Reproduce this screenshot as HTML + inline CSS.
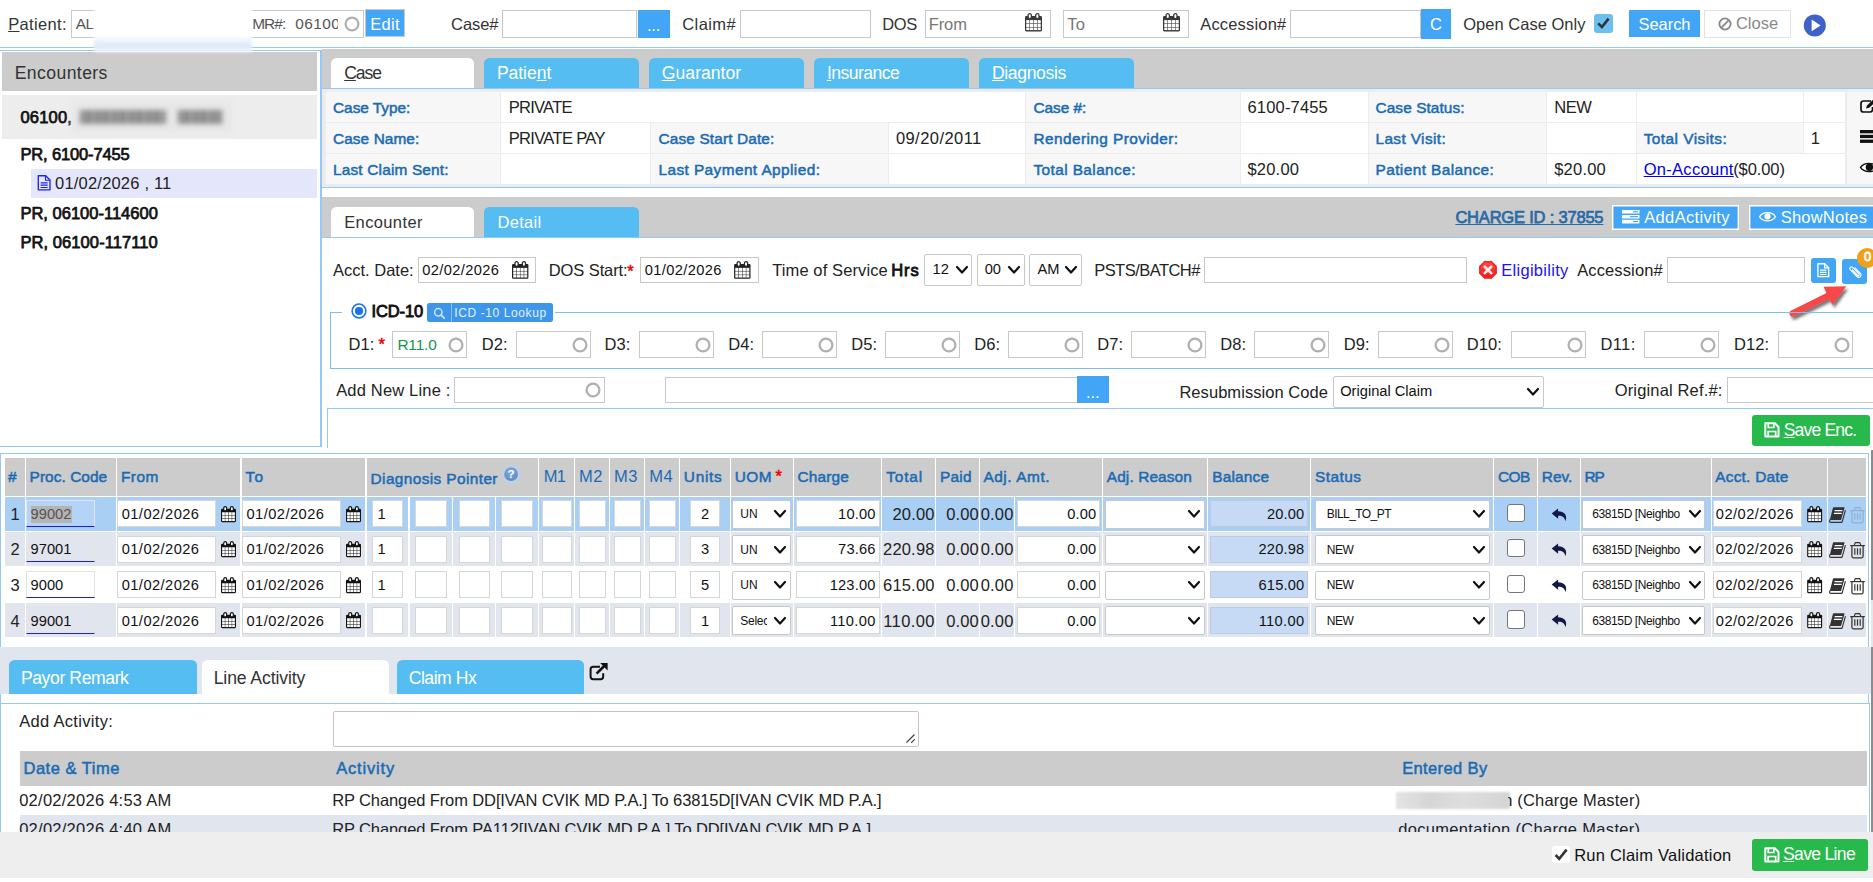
<!DOCTYPE html>
<html lang="en"><head><meta charset="utf-8"><title>Charge Master</title>
<style>
html,body{margin:0;padding:0;background:#fff;}
body{width:1873px;height:882px;overflow:hidden;position:relative;font-family:"Liberation Sans",sans-serif;}
#pg{position:absolute;left:0;top:0;width:1873px;height:882px;overflow:hidden;}
#pg div{position:absolute;box-sizing:content-box;}
.t{position:absolute;white-space:nowrap;display:block;}
.i{position:absolute;overflow:visible;}
</style></head>
<body><div id="pg">
<div style="left:0px;top:46.6px;width:1873px;height:1.6px;background:#94c8f7;"></div>
<span class="t" style="top:13px;font-size:16.5px;line-height:22px;letter-spacing:0.335px;color:#333;left:8.2px;"><u>P</u>atient:</span>
<div style="left:71px;top:10px;width:290.6px;height:25.6px;background:#fff;border:1px solid #c8c8c8;"></div>
<span class="t" style="top:13px;font-size:15.4px;line-height:22px;letter-spacing:-0.545px;color:#555;left:75.7px;">AL</span>
<span class="t" style="top:13px;font-size:15.4px;line-height:22px;letter-spacing:-0.920px;color:#555;left:252.2px;">MR#:</span>
<span class="t" style="top:13px;font-size:15.4px;line-height:22px;letter-spacing:0.478px;color:#555;left:295.2px;width:42.6px;overflow:hidden;">06100</span>
<svg class="i" style="left:343px;top:14.7px;" width="18" height="18" viewBox="0 0 18 18"><circle cx="9" cy="9" r="6.4" fill="none" stroke="#b0b0b0" stroke-width="2.3"/></svg>
<div style="left:94px;top:-6px;width:158px;height:58px;background:linear-gradient(#fff 0,#fff 72%,#dbe8f9 90%,#f4f8fd 100%);filter:blur(1.6px);z-index:5;"></div>
<div style="left:364.6px;top:9.3px;width:38px;height:25.8px;background:#42a5f5;border:1px solid #c4c9d0;"></div>
<span class="t" style="top:13px;font-size:16.5px;line-height:22px;letter-spacing:0.295px;color:#fff;left:370.2px;">Edit</span>
<span class="t" style="top:13px;font-size:16.5px;line-height:22px;letter-spacing:-0.037px;color:#333;left:451px;">Case#</span>
<div style="left:502.2px;top:10px;width:133px;height:26px;background:#fff;border:1px solid #c8c8c8;"></div>
<div style="left:637.7px;top:9.5px;width:32px;height:28px;background:#42a5f5;"></div>
<span class="t" style="top:14px;font-size:16.5px;line-height:22px;letter-spacing:-0.187px;color:#fff;left:646.92px;">...</span>
<span class="t" style="top:13px;font-size:16.5px;line-height:22px;letter-spacing:0.440px;color:#333;left:682.2px;">Claim#</span>
<div style="left:740px;top:10px;width:128.5px;height:26px;background:#fff;border:1px solid #c8c8c8;"></div>
<span class="t" style="top:13px;font-size:16.5px;line-height:22px;letter-spacing:-0.283px;color:#333;left:882.2px;">DOS</span>
<div style="left:925px;top:10px;width:124px;height:26px;background:#fff;border:1px solid #c8c8c8;"></div>
<span class="t" style="top:13px;font-size:16.5px;line-height:22px;letter-spacing:-0.125px;color:#777;left:928.8px;">From</span>
<svg class="i" style="left:1025.2px;top:13.1px;" width="17" height="18.4" viewBox="0 0 17 18.4"><rect x="0" y="3.1" width="17" height="15.3" rx="1.3" fill="#383838"/><rect x="1.25" y="7.10" width="3.10" height="3.20" fill="#fff"/><rect x="4.85" y="7.10" width="3.40" height="3.20" fill="#fff"/><rect x="8.75" y="7.10" width="3.40" height="3.20" fill="#fff"/><rect x="12.65" y="7.10" width="3.10" height="3.20" fill="#fff"/><rect x="1.25" y="10.80" width="3.10" height="3.30" fill="#fff"/><rect x="4.85" y="10.80" width="3.40" height="3.30" fill="#fff"/><rect x="8.75" y="10.80" width="3.40" height="3.30" fill="#fff"/><rect x="12.65" y="10.80" width="3.10" height="3.30" fill="#fff"/><rect x="1.25" y="14.60" width="3.10" height="2.50" fill="#fff"/><rect x="4.85" y="14.60" width="3.40" height="2.50" fill="#fff"/><rect x="8.75" y="14.60" width="3.40" height="2.50" fill="#fff"/><rect x="12.65" y="14.60" width="3.10" height="2.50" fill="#fff"/><rect x="3.1" y="0.65" width="3.3" height="4.9" rx="1.65" fill="#fff" stroke="#383838" stroke-width="1.3"/><rect x="10.7" y="0.65" width="3.3" height="4.9" rx="1.65" fill="#fff" stroke="#383838" stroke-width="1.3"/></svg>
<div style="left:1063px;top:10px;width:124px;height:26px;background:#fff;border:1px solid #c8c8c8;"></div>
<span class="t" style="top:13px;font-size:16.5px;line-height:22px;letter-spacing:0.239px;color:#777;left:1067.2px;">To</span>
<svg class="i" style="left:1163.3px;top:13.1px;" width="17" height="18.4" viewBox="0 0 17 18.4"><rect x="0" y="3.1" width="17" height="15.3" rx="1.3" fill="#383838"/><rect x="1.25" y="7.10" width="3.10" height="3.20" fill="#fff"/><rect x="4.85" y="7.10" width="3.40" height="3.20" fill="#fff"/><rect x="8.75" y="7.10" width="3.40" height="3.20" fill="#fff"/><rect x="12.65" y="7.10" width="3.10" height="3.20" fill="#fff"/><rect x="1.25" y="10.80" width="3.10" height="3.30" fill="#fff"/><rect x="4.85" y="10.80" width="3.40" height="3.30" fill="#fff"/><rect x="8.75" y="10.80" width="3.40" height="3.30" fill="#fff"/><rect x="12.65" y="10.80" width="3.10" height="3.30" fill="#fff"/><rect x="1.25" y="14.60" width="3.10" height="2.50" fill="#fff"/><rect x="4.85" y="14.60" width="3.40" height="2.50" fill="#fff"/><rect x="8.75" y="14.60" width="3.40" height="2.50" fill="#fff"/><rect x="12.65" y="14.60" width="3.10" height="2.50" fill="#fff"/><rect x="3.1" y="0.65" width="3.3" height="4.9" rx="1.65" fill="#fff" stroke="#383838" stroke-width="1.3"/><rect x="10.7" y="0.65" width="3.3" height="4.9" rx="1.65" fill="#fff" stroke="#383838" stroke-width="1.3"/></svg>
<span class="t" style="top:13px;font-size:16.5px;line-height:22px;letter-spacing:0.184px;color:#333;left:1200.2px;">Accession#</span>
<div style="left:1290.2px;top:10px;width:129px;height:26px;background:#fff;border:1px solid #c8c8c8;"></div>
<div style="left:1421px;top:9px;width:30px;height:30px;background:#42a5f5;"></div>
<span class="t" style="top:13px;font-size:16.5px;line-height:22px;letter-spacing:-1.513px;color:#fff;left:1430.04px;">C</span>
<span class="t" style="top:13px;font-size:16.5px;line-height:22px;letter-spacing:0.026px;color:#333;left:1463.2px;">Open Case Only</span>
<div style="left:1594.2px;top:14.3px;width:18.6px;height:18.3px;background:#6cc0ef;border-radius:3px;"></div>
<svg class="i" style="left:1594.2px;top:14.3px;" width="18.6" height="18.3" viewBox="0 0 18.6 18.3"><path d="M4.2 9.4 L7.9 13 L14.6 4.6" fill="none" stroke="#333" stroke-width="2.6"/></svg>
<div style="left:1629px;top:10px;width:71px;height:27px;background:#42a5f5;"></div>
<span class="t" style="top:13px;font-size:16.5px;line-height:22px;letter-spacing:-0.078px;color:#fff;left:1638.6px;">Search</span>
<div style="left:1704px;top:10px;width:84.6px;height:26.4px;background:#fff;border:1px solid #e2e2e2;"></div>
<svg class="i" style="left:1718px;top:16.5px;" width="14" height="14" viewBox="0 0 14 14"><circle cx="7" cy="7" r="5.6" fill="none" stroke="#888" stroke-width="1.8"/><path d="M3.2 10.8 L10.8 3.2" stroke="#888" stroke-width="1.8"/></svg>
<span class="t" style="top:12px;font-size:16.5px;line-height:22px;letter-spacing:0.023px;color:#888;left:1735.9px;">Close</span>
<svg class="i" style="left:1803px;top:14px;" width="23" height="23" viewBox="0 0 23 23"><circle cx="11.8" cy="11.4" r="11" fill="#3d62c9"/><path d="M8.6 5.6 L17.6 11.4 L8.6 17.2 Z" fill="#fff"/></svg>
<div style="left:0px;top:49.6px;width:322px;height:1.3px;background:#94c8f7;"></div>
<div style="left:0px;top:445.7px;width:322px;height:1.3px;background:#94c8f7;"></div>
<div style="left:320.2px;top:49.6px;width:1.9px;height:397.4px;background:#94c8f7;"></div>
<div style="left:2px;top:52px;width:315px;height:38.8px;background:#cccccc;"></div>
<span class="t" style="top:62px;font-size:17.6px;line-height:22px;letter-spacing:0.412px;color:#333;left:14.7px;">Encounters</span>
<div style="left:2px;top:94.8px;width:315px;height:44px;background:#ededed;"></div>
<span class="t" style="top:106px;font-size:16.5px;line-height:22px;letter-spacing:0.210px;color:#111;-webkit-text-stroke:0.75px #111;left:20.4px;">06100,</span>
<div style="left:72px;top:103px;width:160px;height:28px;background:#e6e6e6;filter:blur(3px);"></div>
<div style="left:80px;top:110px;width:86px;height:13.5px;background:repeating-linear-gradient(90deg,#6e6e6e 0,#8c8c8c 5px,#666 9px,#999 13px,#707070 17px);filter:blur(2.8px);opacity:.8;"></div>
<div style="left:178px;top:110px;width:44px;height:13.5px;background:repeating-linear-gradient(90deg,#6e6e6e 0,#8c8c8c 5px,#666 9px,#999 13px,#707070 17px);filter:blur(2.8px);opacity:.8;"></div>
<span class="t" style="top:143px;font-size:16.5px;line-height:22px;letter-spacing:-0.135px;color:#111;-webkit-text-stroke:0.75px #111;left:20.4px;">PR, 6100-7455</span>
<div style="left:31.2px;top:169px;width:285.8px;height:28.6px;background:#e4e7fc;"></div>
<svg class="i" style="left:37px;top:175.2px;" width="14.3" height="15.6" viewBox="0 0 14 16"><path d="M1 0.8 H8.6 L13 5.2 V15.2 H1 Z" fill="none" stroke="#2222ee" stroke-width="1.4" stroke-linejoin="round"/><path d="M8.4 1 V5.4 H12.8" fill="none" stroke="#2222ee" stroke-width="1.19"/><path d="M3.4 8 H10.6 M3.4 10.4 H10.6 M3.4 12.8 H10.6" stroke="#2222ee" stroke-width="1.19"/></svg>
<span class="t" style="top:172px;font-size:16.5px;line-height:22px;letter-spacing:0.194px;color:#222;left:55.1px;">01/02/2026 , 11</span>
<span class="t" style="top:202px;font-size:16.5px;line-height:22px;letter-spacing:0.009px;color:#111;-webkit-text-stroke:0.75px #111;left:20.4px;">PR, 06100-114600</span>
<span class="t" style="top:231px;font-size:16.5px;line-height:22px;letter-spacing:0.086px;color:#111;-webkit-text-stroke:0.75px #111;left:20.4px;">PR, 06100-117110</span>
<div style="left:322px;top:49.4px;width:1551px;height:39px;background:#cccccc;"></div>
<div style="left:331px;top:58.2px;width:143px;height:30.3px;background:#fff;border-radius:5.5px 5.5px 0 0;"></div>
<span class="t" style="top:62px;font-size:17.6px;line-height:22px;letter-spacing:-1.066px;color:#333;left:344.2px;"><u>C</u>ase</span>
<div style="left:484px;top:58.2px;width:155px;height:30.3px;background:#55bdf2;border-radius:5.5px 5.5px 0 0;"></div>
<span class="t" style="top:62px;font-size:17.6px;line-height:22px;letter-spacing:-0.067px;color:#fff;left:496.9px;">Patie<u>n</u>t</span>
<div style="left:649px;top:58.2px;width:155px;height:30.3px;background:#55bdf2;border-radius:5.5px 5.5px 0 0;"></div>
<span class="t" style="top:62px;font-size:17.6px;line-height:22px;letter-spacing:0.022px;color:#fff;left:661.8px;"><u>G</u>uarantor</span>
<div style="left:814px;top:58.2px;width:155px;height:30.3px;background:#55bdf2;border-radius:5.5px 5.5px 0 0;"></div>
<span class="t" style="top:62px;font-size:17.6px;line-height:22px;letter-spacing:-0.539px;color:#fff;left:826.9px;"><u>I</u>nsurance</span>
<div style="left:979px;top:58.2px;width:155px;height:30.3px;background:#55bdf2;border-radius:5.5px 5.5px 0 0;"></div>
<span class="t" style="top:62px;font-size:17.6px;line-height:22px;letter-spacing:-0.382px;color:#fff;left:992px;"><u>D</u>iagnosis</span>
<div style="left:322px;top:88.3px;width:1553px;height:97.6px;border:1.4px solid #94c8f7;border-left:none;background:#ececec;"></div>
<div style="left:326.3px;top:92px;width:173.7px;height:30.2px;background:#f7f7f7;"></div>
<div style="left:501.2px;top:92px;width:523.5px;height:30.2px;background:#fff;"></div>
<div style="left:1026px;top:92px;width:214px;height:30.2px;background:#f7f7f7;"></div>
<div style="left:1241px;top:92px;width:127px;height:30.2px;background:#fff;"></div>
<div style="left:1369.3px;top:92px;width:176.9px;height:30.2px;background:#f7f7f7;"></div>
<div style="left:1547.4px;top:92px;width:88.6px;height:30.2px;background:#fff;"></div>
<div style="left:1637.3px;top:92px;width:165.7px;height:30.2px;background:#fff;"></div>
<div style="left:1804px;top:92px;width:41.2px;height:30.2px;background:#fff;"></div>
<div style="left:326.3px;top:123.4px;width:173.7px;height:29.4px;background:#f7f7f7;"></div>
<div style="left:501.2px;top:123.4px;width:148.5px;height:29.4px;background:#fff;"></div>
<div style="left:651px;top:123.4px;width:236.9px;height:29.4px;background:#f7f7f7;"></div>
<div style="left:889px;top:123.4px;width:135.7px;height:29.4px;background:#fff;"></div>
<div style="left:1026px;top:123.4px;width:214px;height:29.4px;background:#f7f7f7;"></div>
<div style="left:1241px;top:123.4px;width:127px;height:29.4px;background:#fff;"></div>
<div style="left:1369.3px;top:123.4px;width:176.9px;height:29.4px;background:#f7f7f7;"></div>
<div style="left:1547.4px;top:123.4px;width:88.6px;height:29.4px;background:#fff;"></div>
<div style="left:1637.3px;top:123.4px;width:165.7px;height:29.4px;background:#f7f7f7;"></div>
<div style="left:1804px;top:123.4px;width:41.2px;height:29.4px;background:#fff;"></div>
<div style="left:326.3px;top:154px;width:173.7px;height:29.6px;background:#f7f7f7;"></div>
<div style="left:501.2px;top:154px;width:148.5px;height:29.6px;background:#fff;"></div>
<div style="left:651px;top:154px;width:236.9px;height:29.6px;background:#f7f7f7;"></div>
<div style="left:889px;top:154px;width:135.7px;height:29.6px;background:#fff;"></div>
<div style="left:1026px;top:154px;width:214px;height:29.6px;background:#f7f7f7;"></div>
<div style="left:1241px;top:154px;width:127px;height:29.6px;background:#fff;"></div>
<div style="left:1369.3px;top:154px;width:176.9px;height:29.6px;background:#f7f7f7;"></div>
<div style="left:1547.4px;top:154px;width:88.6px;height:29.6px;background:#fff;"></div>
<div style="left:1637.3px;top:154px;width:207.9px;height:29.6px;background:#fff;"></div>
<div style="left:1846.5px;top:92px;width:27px;height:91.6px;background:#f7f7f7;"></div>
<span class="t" style="top:97px;font-size:15.4px;line-height:22px;letter-spacing:-0.021px;color:#1a6bb3;-webkit-text-stroke:0.5px #1a6bb3;left:333px;">Case Type:</span>
<span class="t" style="top:128px;font-size:15.4px;line-height:22px;letter-spacing:0.084px;color:#1a6bb3;-webkit-text-stroke:0.5px #1a6bb3;left:333px;">Case Name:</span>
<span class="t" style="top:159px;font-size:15.4px;line-height:22px;letter-spacing:0.177px;color:#1a6bb3;-webkit-text-stroke:0.5px #1a6bb3;left:333px;">Last Claim Sent:</span>
<span class="t" style="top:128px;font-size:15.4px;line-height:22px;letter-spacing:0.137px;color:#1a6bb3;-webkit-text-stroke:0.5px #1a6bb3;left:658.5px;">Case Start Date:</span>
<span class="t" style="top:159px;font-size:15.4px;line-height:22px;letter-spacing:0.413px;color:#1a6bb3;-webkit-text-stroke:0.5px #1a6bb3;left:658.5px;">Last Payment Applied:</span>
<span class="t" style="top:97px;font-size:15.4px;line-height:22px;letter-spacing:-0.009px;color:#1a6bb3;-webkit-text-stroke:0.5px #1a6bb3;left:1033.4px;">Case #:</span>
<span class="t" style="top:128px;font-size:15.4px;line-height:22px;letter-spacing:0.430px;color:#1a6bb3;-webkit-text-stroke:0.5px #1a6bb3;left:1033.4px;">Rendering Provider:</span>
<span class="t" style="top:159px;font-size:15.4px;line-height:22px;letter-spacing:0.412px;color:#1a6bb3;-webkit-text-stroke:0.5px #1a6bb3;left:1033.4px;">Total Balance:</span>
<span class="t" style="top:97px;font-size:15.4px;line-height:22px;letter-spacing:0.087px;color:#1a6bb3;-webkit-text-stroke:0.5px #1a6bb3;left:1375.5px;">Case Status:</span>
<span class="t" style="top:128px;font-size:15.4px;line-height:22px;letter-spacing:0.374px;color:#1a6bb3;-webkit-text-stroke:0.5px #1a6bb3;left:1375.5px;">Last Visit:</span>
<span class="t" style="top:159px;font-size:15.4px;line-height:22px;letter-spacing:0.416px;color:#1a6bb3;-webkit-text-stroke:0.5px #1a6bb3;left:1375.5px;">Patient Balance:</span>
<span class="t" style="top:128px;font-size:15.4px;line-height:22px;letter-spacing:0.461px;color:#1a6bb3;-webkit-text-stroke:0.5px #1a6bb3;left:1643.7px;">Total Visits:</span>
<span class="t" style="top:96px;font-size:16.5px;line-height:22px;letter-spacing:-0.720px;color:#222;left:508.7px;">PRIVATE</span>
<span class="t" style="top:127px;font-size:16.5px;line-height:22px;letter-spacing:-0.653px;color:#222;left:508.7px;">PRIVATE PAY</span>
<span class="t" style="top:127px;font-size:16.5px;line-height:22px;letter-spacing:0.439px;color:#222;left:895.9px;">09/20/2011</span>
<span class="t" style="top:96px;font-size:16.5px;line-height:22px;letter-spacing:0.169px;color:#222;left:1247.5px;">6100-7455</span>
<span class="t" style="top:158px;font-size:16.5px;line-height:22px;letter-spacing:0.194px;color:#222;left:1247.5px;">$20.00</span>
<span class="t" style="top:96px;font-size:16.5px;line-height:22px;letter-spacing:-0.433px;color:#222;left:1554.2px;">NEW</span>
<span class="t" style="top:158px;font-size:16.5px;line-height:22px;letter-spacing:0.227px;color:#222;left:1554.2px;">$20.00</span>
<span class="t" style="top:158px;font-size:16.5px;line-height:22px;letter-spacing:0.291px;color:#0000ee;left:1643.7px;text-decoration:underline;">On-Account</span>
<span class="t" style="top:158px;font-size:16.5px;line-height:22px;letter-spacing:-0.095px;color:#222;left:1733.2px;">($0.00)</span>
<span class="t" style="top:127px;font-size:16.5px;line-height:22px;letter-spacing:0.262px;color:#222;left:1810.8px;">1</span>
<svg class="i" style="left:1860px;top:98.6px;" width="16" height="14" viewBox="0 0 16 14"><path d="M11 2 H3.5 C2 2 1 3 1 4.5 V10.5 C1 12 2 13 3.5 13 H10 C11.5 13 12.5 12 12.5 10.5 V8" fill="none" stroke="#111" stroke-width="1.7"/><path d="M6 9.5 L7 6.5 L13 0.8 L15.4 3 L9.2 8.8 Z" fill="#111"/></svg>
<svg class="i" style="left:1860px;top:129.5px;" width="16" height="13" viewBox="0 0 16 13"><rect x="0" y="0" width="16" height="3.3" fill="#111"/><rect x="0" y="4.8" width="16" height="3.3" fill="#111"/><rect x="0" y="9.6" width="16" height="3.3" fill="#111"/></svg>
<svg class="i" style="left:1860px;top:161.6px;" width="18" height="11.6" viewBox="0 0 18 11.6"><path d="M0.5 5.5 C4 0 14 0 17.5 5.5 C14 11 4 11 0.5 5.5 Z" fill="#fff" stroke="#111" stroke-width="1.4"/><circle cx="9.4" cy="5.2" r="3.7" fill="#111"/></svg>
<div style="left:322px;top:197px;width:1551px;height:40.2px;background:#cccccc;"></div>
<div style="left:322px;top:236.8px;width:1551px;height:1.4px;background:#94c8f7;"></div>
<div style="left:331px;top:206.8px;width:143px;height:30.3px;background:#fff;border-radius:5.5px 5.5px 0 0;"></div>
<span class="t" style="top:211px;font-size:16.5px;line-height:22px;letter-spacing:0.379px;color:#333;left:344.2px;">Encounter</span>
<div style="left:484px;top:206.8px;width:155px;height:30.3px;background:#55bdf2;border-radius:5.5px 5.5px 0 0;"></div>
<span class="t" style="top:211px;font-size:16.5px;line-height:22px;letter-spacing:0.335px;color:#fff;left:497.4px;">Detail</span>
<span class="t" style="top:206px;font-size:16.5px;line-height:22px;letter-spacing:-0.198px;color:#2b6aa6;-webkit-text-stroke:0.75px #2b6aa6;left:1455.4px;text-decoration:underline;">CHARGE ID : 37855</span>
<div style="left:1612px;top:205px;width:127.3px;height:24.6px;background:#42a5f5;box-shadow:inset 0 0 0 1.4px #fff;"></div>
<svg class="i" style="left:1621.5px;top:210px;" width="17.5" height="13.5" viewBox="0 0 17.5 13.5"><rect x="0" y="0" width="17.5" height="3.6" rx="0.6" fill="#fff"/><rect x="0" y="4.9" width="17.5" height="3.6" rx="0.6" fill="#fff"/><rect x="0" y="9.8" width="17.5" height="3.6" rx="0.6" fill="#fff"/><rect x="11" y="1.2" width="5" height="1.1" fill="#42a5f5"/><rect x="8" y="6.1" width="8" height="1.1" fill="#42a5f5"/><rect x="11" y="11" width="5" height="1.1" fill="#42a5f5"/></svg>
<span class="t" style="top:206px;font-size:16.5px;line-height:22px;letter-spacing:0.364px;color:#fff;left:1644.2px;">AddActivity</span>
<div style="left:1748.8px;top:205px;width:130px;height:24.6px;background:#42a5f5;box-shadow:inset 0 0 0 1.4px #fff;"></div>
<svg class="i" style="left:1758.5px;top:211.2px;" width="17" height="11.5" viewBox="0 0 18 12"><path d="M0.6 6 C4 0.2 14 0.2 17.4 6 C14 11.8 4 11.8 0.6 6 Z" fill="none" stroke="#fff" stroke-width="1.5"/><circle cx="9" cy="5.6" r="3.3" fill="#fff"/><circle cx="7.8" cy="4.4" r="1.1" fill="#42a5f5" opacity="0"/></svg>
<span class="t" style="top:206px;font-size:16.5px;line-height:22px;letter-spacing:0.227px;color:#fff;left:1780.7px;">ShowNotes</span>
<span class="t" style="top:259px;font-size:16.5px;line-height:22px;letter-spacing:-0.005px;color:#222;left:333px;">Acct. Date:</span>
<div style="left:418.1px;top:257px;width:115.5px;height:24.3px;background:#fff;border:1px solid #c8c8c8;"></div>
<span class="t" style="top:259px;font-size:14.67px;line-height:22px;letter-spacing:0.379px;color:#111;left:422.2px;">02/02/2026</span>
<svg class="i" style="left:512px;top:260.5px;" width="16.4" height="17.8" viewBox="0 0 17 18.4"><rect x="0" y="3.1" width="17" height="15.3" rx="1.3" fill="#222"/><rect x="1.25" y="7.10" width="3.10" height="3.20" fill="#fff"/><rect x="4.85" y="7.10" width="3.40" height="3.20" fill="#fff"/><rect x="8.75" y="7.10" width="3.40" height="3.20" fill="#fff"/><rect x="12.65" y="7.10" width="3.10" height="3.20" fill="#fff"/><rect x="1.25" y="10.80" width="3.10" height="3.30" fill="#fff"/><rect x="4.85" y="10.80" width="3.40" height="3.30" fill="#fff"/><rect x="8.75" y="10.80" width="3.40" height="3.30" fill="#fff"/><rect x="12.65" y="10.80" width="3.10" height="3.30" fill="#fff"/><rect x="1.25" y="14.60" width="3.10" height="2.50" fill="#fff"/><rect x="4.85" y="14.60" width="3.40" height="2.50" fill="#fff"/><rect x="8.75" y="14.60" width="3.40" height="2.50" fill="#fff"/><rect x="12.65" y="14.60" width="3.10" height="2.50" fill="#fff"/><rect x="3.1" y="0.65" width="3.3" height="4.9" rx="1.65" fill="#fff" stroke="#222" stroke-width="1.3"/><rect x="10.7" y="0.65" width="3.3" height="4.9" rx="1.65" fill="#fff" stroke="#222" stroke-width="1.3"/></svg>
<span class="t" style="top:259px;font-size:16.5px;line-height:22px;letter-spacing:-0.103px;color:#222;left:548.8px;">DOS Start:</span>
<span class="t" style="top:260px;font-size:16.5px;line-height:22px;letter-spacing:0.078px;color:#e00;-webkit-text-stroke:0.5px #e00;left:627.2px;">*</span>
<div style="left:640.2px;top:257px;width:116.4px;height:24.3px;background:#fff;border:1px solid #c8c8c8;"></div>
<span class="t" style="top:259px;font-size:14.67px;line-height:22px;letter-spacing:0.379px;color:#111;left:644.7px;">01/02/2026</span>
<svg class="i" style="left:734px;top:260.5px;" width="16.6" height="17.8" viewBox="0 0 17 18.4"><rect x="0" y="3.1" width="17" height="15.3" rx="1.3" fill="#222"/><rect x="1.25" y="7.10" width="3.10" height="3.20" fill="#fff"/><rect x="4.85" y="7.10" width="3.40" height="3.20" fill="#fff"/><rect x="8.75" y="7.10" width="3.40" height="3.20" fill="#fff"/><rect x="12.65" y="7.10" width="3.10" height="3.20" fill="#fff"/><rect x="1.25" y="10.80" width="3.10" height="3.30" fill="#fff"/><rect x="4.85" y="10.80" width="3.40" height="3.30" fill="#fff"/><rect x="8.75" y="10.80" width="3.40" height="3.30" fill="#fff"/><rect x="12.65" y="10.80" width="3.10" height="3.30" fill="#fff"/><rect x="1.25" y="14.60" width="3.10" height="2.50" fill="#fff"/><rect x="4.85" y="14.60" width="3.40" height="2.50" fill="#fff"/><rect x="8.75" y="14.60" width="3.40" height="2.50" fill="#fff"/><rect x="12.65" y="14.60" width="3.10" height="2.50" fill="#fff"/><rect x="3.1" y="0.65" width="3.3" height="4.9" rx="1.65" fill="#fff" stroke="#222" stroke-width="1.3"/><rect x="10.7" y="0.65" width="3.3" height="4.9" rx="1.65" fill="#fff" stroke="#222" stroke-width="1.3"/></svg>
<span class="t" style="top:259px;font-size:16.5px;line-height:22px;letter-spacing:0.108px;color:#222;left:772.2px;">Time of Service</span>
<span class="t" style="top:259px;font-size:16.5px;line-height:22px;letter-spacing:0.909px;color:#111;-webkit-text-stroke:0.85px #111;left:891.2px;">Hrs</span>
<div style="left:924.3px;top:254.4px;width:46.2px;height:29.2px;background:#fff;border:1px solid #c8c8c8;border-radius:2px;"></div>
<span class="t" style="top:258px;font-size:14.67px;line-height:22px;letter-spacing:0.000px;color:#111;left:932.5px;">12</span>
<svg class="i" style="left:954.8px;top:265.25px;" width="14" height="9.5" viewBox="0 0 14 9.5"><polyline points="2,2 7,7.5 12,2" fill="none" stroke="#111" stroke-width="2.2" stroke-linecap="round" stroke-linejoin="round"/></svg>
<div style="left:976.5px;top:254.4px;width:46.2px;height:29.2px;background:#fff;border:1px solid #c8c8c8;border-radius:2px;"></div>
<span class="t" style="top:258px;font-size:14.67px;line-height:22px;letter-spacing:0.000px;color:#111;left:984.7px;">00</span>
<svg class="i" style="left:1007px;top:265.25px;" width="14" height="9.5" viewBox="0 0 14 9.5"><polyline points="2,2 7,7.5 12,2" fill="none" stroke="#111" stroke-width="2.2" stroke-linecap="round" stroke-linejoin="round"/></svg>
<div style="left:1029.2px;top:254.4px;width:50.4px;height:29.2px;background:#fff;border:1px solid #c8c8c8;border-radius:2px;"></div>
<span class="t" style="top:258px;font-size:14.67px;line-height:22px;letter-spacing:0.000px;color:#111;left:1037.4px;">AM</span>
<svg class="i" style="left:1063.9px;top:265.25px;" width="14" height="9.5" viewBox="0 0 14 9.5"><polyline points="2,2 7,7.5 12,2" fill="none" stroke="#111" stroke-width="2.2" stroke-linecap="round" stroke-linejoin="round"/></svg>
<span class="t" style="top:259px;font-size:16.5px;line-height:22px;letter-spacing:-0.539px;color:#222;left:1094.2px;">PSTS/BATCH#</span>
<div style="left:1204px;top:257px;width:261px;height:24.3px;background:#fff;border:1px solid #c8c8c8;"></div>
<svg class="i" style="left:1479px;top:261.1px;" width="18" height="17.8" viewBox="0 0 19.5 19.5"><defs><linearGradient id="eg" x1="0" y1="0" x2="0" y2="1"><stop offset="0" stop-color="#ff4a44"/><stop offset="1" stop-color="#ee1c1c"/></linearGradient></defs><path d="M6 0.8 H13.5 L18.7 6 V13.5 L13.5 18.7 H6 L0.8 13.5 V6 Z" fill="url(#eg)" stroke="#f02222" stroke-width="1.6" stroke-linejoin="round"/><path d="M6.2 6.2 L13.3 13.3 M13.3 6.2 L6.2 13.3" stroke="#ffe9e6" stroke-width="3" stroke-linecap="round"/></svg>
<span class="t" style="top:259px;font-size:16.5px;line-height:22px;letter-spacing:0.300px;color:#1c10ff;left:1501.2px;">Eligibility</span>
<span class="t" style="top:259px;font-size:16.5px;line-height:22px;letter-spacing:0.124px;color:#222;left:1577.2px;">Accession#</span>
<div style="left:1667px;top:257px;width:135.5px;height:24.3px;background:#fff;border:1px solid #c8c8c8;"></div>
<div style="left:1811px;top:258.2px;width:24.9px;height:24.6px;background:#42a5f5;border-radius:3px;"></div>
<svg class="i" style="left:1817.2px;top:263.4px;" width="12.6" height="14.4" viewBox="0 0 14 16"><path d="M1 0.8 H8.6 L13 5.2 V15.2 H1 Z" fill="none" stroke="#fff" stroke-width="1.5" stroke-linejoin="round"/><path d="M8.4 1 V5.4 H12.8" fill="none" stroke="#fff" stroke-width="1.275"/><path d="M3.4 8 H10.6 M3.4 10.4 H10.6 M3.4 12.8 H10.6" stroke="#fff" stroke-width="1.275"/></svg>
<div style="left:1842.2px;top:259.1px;width:24.5px;height:24.8px;background:#42a5f5;border-radius:3px;"></div>
<svg class="i" style="left:1846.5px;top:263.5px;" width="16" height="16" viewBox="0 0 16 16"><path d="M5.4 5.9 L10.6 11.3 C11.5 12.2 12.9 10.9 12 10 L5.6 3.4 C4 1.8 1.7 4 3.3 5.7 L9.9 12.5 C12.3 14.9 15.6 11.6 13.2 9.2 L8 3.9" fill="none" stroke="#fff" stroke-width="1.15" stroke-linecap="round"/></svg>
<div style="left:1857.1px;top:248px;width:20.4px;height:20.4px;background:#f0a018;border-radius:50%;"></div>
<span class="t" style="top:246px;font-size:13px;line-height:22px;letter-spacing:-0.326px;color:#fff;-webkit-text-stroke:0.8px #fff;left:1863.98px;">0</span>
<svg class="i" style="left:1780px;top:280px;" width="80" height="50" viewBox="0 0 80 50"><defs><filter id="sh" x="-30%" y="-30%" width="160%" height="180%"><feGaussianBlur in="SourceAlpha" stdDeviation="1.5"/><feOffset dx="1.5" dy="3.2"/><feComponentTransfer><feFuncA type="linear" slope="0.55"/></feComponentTransfer><feMerge><feMergeNode/><feMergeNode in="SourceGraphic"/></feMerge></filter></defs><g filter="url(#sh)"><path d="M12.6 33.4 L49 15.4" stroke="#f7464a" stroke-width="6.2" stroke-linecap="round"/><path d="M43.5 6.8 L66.2 6.3 L52.4 24.9 Z" fill="#f7464a"/></g></svg>
<div style="left:330px;top:311.8px;width:1560px;height:55.4px;border:1.3px solid #7fc0ea;border-right:none;"></div>
<div style="left:342px;top:300px;width:213px;height:24px;background:#fff;"></div>
<svg class="i" style="left:351.1px;top:303.4px;" width="16" height="16" viewBox="0 0 16 16"><circle cx="8" cy="8" r="6.9" fill="#fff" stroke="#1a73e8" stroke-width="1.5"/><circle cx="8" cy="8" r="4.1" fill="#1a73e8"/></svg>
<span class="t" style="top:300px;font-size:16.5px;line-height:22px;letter-spacing:-0.128px;color:#111;-webkit-text-stroke:0.9px #111;left:371.5px;">ICD-10</span>
<div style="left:427.2px;top:303.3px;width:125.7px;height:18.6px;background:#3d96ea;border-radius:2.5px;"></div>
<div style="left:450.6px;top:303.3px;width:1px;height:18.6px;background:#8ac3f5;"></div>
<svg class="i" style="left:432.6px;top:306.5px;" width="13" height="13" viewBox="0 0 13 13"><circle cx="5.3" cy="5.3" r="3.7" fill="none" stroke="#cfe4fa" stroke-width="1.5"/><path d="M8.2 8.2 L11.2 11.2" stroke="#cfe4fa" stroke-width="1.7" stroke-linecap="round"/></svg>
<span class="t" style="top:302px;font-size:12px;line-height:22px;letter-spacing:0.612px;color:#e4f0fd;left:454.2px;font-family:"DejaVu Sans","Liberation Sans",sans-serif;">ICD -10 Lookup</span>
<span class="t" style="top:333px;font-size:16.5px;line-height:22px;letter-spacing:0.061px;color:#222;left:348.6px;">D1:</span>
<div style="left:392px;top:331.4px;width:72.6px;height:24.2px;background:#fff;border:1px solid #c8c8c8;"></div>
<svg class="i" style="left:447px;top:335.8px;" width="18" height="18" viewBox="0 0 18 18"><circle cx="9" cy="9" r="6.4" fill="none" stroke="#b0b0b0" stroke-width="2.3"/></svg>
<span class="t" style="top:333px;font-size:16.5px;line-height:22px;letter-spacing:0.061px;color:#222;left:481.8px;">D2:</span>
<div style="left:516.2px;top:331.4px;width:72.6px;height:24.2px;background:#fff;border:1px solid #c8c8c8;"></div>
<svg class="i" style="left:571.2px;top:335.8px;" width="18" height="18" viewBox="0 0 18 18"><circle cx="9" cy="9" r="6.4" fill="none" stroke="#b0b0b0" stroke-width="2.3"/></svg>
<span class="t" style="top:333px;font-size:16.5px;line-height:22px;letter-spacing:0.061px;color:#222;left:604.5px;">D3:</span>
<div style="left:639px;top:331.4px;width:72.6px;height:24.2px;background:#fff;border:1px solid #c8c8c8;"></div>
<svg class="i" style="left:694px;top:335.8px;" width="18" height="18" viewBox="0 0 18 18"><circle cx="9" cy="9" r="6.4" fill="none" stroke="#b0b0b0" stroke-width="2.3"/></svg>
<span class="t" style="top:333px;font-size:16.5px;line-height:22px;letter-spacing:0.061px;color:#222;left:728.2px;">D4:</span>
<div style="left:762.2px;top:331.4px;width:72.6px;height:24.2px;background:#fff;border:1px solid #c8c8c8;"></div>
<svg class="i" style="left:817.2px;top:335.8px;" width="18" height="18" viewBox="0 0 18 18"><circle cx="9" cy="9" r="6.4" fill="none" stroke="#b0b0b0" stroke-width="2.3"/></svg>
<span class="t" style="top:333px;font-size:16.5px;line-height:22px;letter-spacing:0.061px;color:#222;left:851.2px;">D5:</span>
<div style="left:885.4px;top:331.4px;width:72.6px;height:24.2px;background:#fff;border:1px solid #c8c8c8;"></div>
<svg class="i" style="left:940.4px;top:335.8px;" width="18" height="18" viewBox="0 0 18 18"><circle cx="9" cy="9" r="6.4" fill="none" stroke="#b0b0b0" stroke-width="2.3"/></svg>
<span class="t" style="top:333px;font-size:16.5px;line-height:22px;letter-spacing:0.061px;color:#222;left:974.3px;">D6:</span>
<div style="left:1008.3px;top:331.4px;width:72.6px;height:24.2px;background:#fff;border:1px solid #c8c8c8;"></div>
<svg class="i" style="left:1063.3px;top:335.8px;" width="18" height="18" viewBox="0 0 18 18"><circle cx="9" cy="9" r="6.4" fill="none" stroke="#b0b0b0" stroke-width="2.3"/></svg>
<span class="t" style="top:333px;font-size:16.5px;line-height:22px;letter-spacing:0.061px;color:#222;left:1097.2px;">D7:</span>
<div style="left:1131.2px;top:331.4px;width:72.6px;height:24.2px;background:#fff;border:1px solid #c8c8c8;"></div>
<svg class="i" style="left:1186.2px;top:335.8px;" width="18" height="18" viewBox="0 0 18 18"><circle cx="9" cy="9" r="6.4" fill="none" stroke="#b0b0b0" stroke-width="2.3"/></svg>
<span class="t" style="top:333px;font-size:16.5px;line-height:22px;letter-spacing:0.061px;color:#222;left:1220.2px;">D8:</span>
<div style="left:1254.2px;top:331.4px;width:72.6px;height:24.2px;background:#fff;border:1px solid #c8c8c8;"></div>
<svg class="i" style="left:1309.2px;top:335.8px;" width="18" height="18" viewBox="0 0 18 18"><circle cx="9" cy="9" r="6.4" fill="none" stroke="#b0b0b0" stroke-width="2.3"/></svg>
<span class="t" style="top:333px;font-size:16.5px;line-height:22px;letter-spacing:0.061px;color:#222;left:1343.7px;">D9:</span>
<div style="left:1378.1px;top:331.4px;width:72.6px;height:24.2px;background:#fff;border:1px solid #c8c8c8;"></div>
<svg class="i" style="left:1433.1px;top:335.8px;" width="18" height="18" viewBox="0 0 18 18"><circle cx="9" cy="9" r="6.4" fill="none" stroke="#b0b0b0" stroke-width="2.3"/></svg>
<span class="t" style="top:333px;font-size:16.5px;line-height:22px;letter-spacing:0.111px;color:#222;left:1466.7px;">D10:</span>
<div style="left:1511.2px;top:331.4px;width:72.6px;height:24.2px;background:#fff;border:1px solid #c8c8c8;"></div>
<svg class="i" style="left:1566.2px;top:335.8px;" width="18" height="18" viewBox="0 0 18 18"><circle cx="9" cy="9" r="6.4" fill="none" stroke="#b0b0b0" stroke-width="2.3"/></svg>
<span class="t" style="top:333px;font-size:16.5px;line-height:22px;letter-spacing:0.416px;color:#222;left:1600.4px;">D11:</span>
<div style="left:1644.2px;top:331.4px;width:72.6px;height:24.2px;background:#fff;border:1px solid #c8c8c8;"></div>
<svg class="i" style="left:1699.2px;top:335.8px;" width="18" height="18" viewBox="0 0 18 18"><circle cx="9" cy="9" r="6.4" fill="none" stroke="#b0b0b0" stroke-width="2.3"/></svg>
<span class="t" style="top:333px;font-size:16.5px;line-height:22px;letter-spacing:0.111px;color:#222;left:1733.9px;">D12:</span>
<div style="left:1778.2px;top:331.4px;width:72.6px;height:24.2px;background:#fff;border:1px solid #c8c8c8;"></div>
<svg class="i" style="left:1833.2px;top:335.8px;" width="18" height="18" viewBox="0 0 18 18"><circle cx="9" cy="9" r="6.4" fill="none" stroke="#b0b0b0" stroke-width="2.3"/></svg>
<span class="t" style="top:333px;font-size:16.5px;line-height:22px;letter-spacing:0.078px;color:#e00;-webkit-text-stroke:0.5px #e00;left:378.5px;">*</span>
<span class="t" style="top:334px;font-size:15.4px;line-height:22px;letter-spacing:-0.147px;color:#12964a;left:397.4px;">R11.0</span>
<span class="t" style="top:379px;font-size:16.5px;line-height:22px;letter-spacing:0.174px;color:#222;left:336.2px;">Add New Line :</span>
<div style="left:454.3px;top:376.6px;width:148.4px;height:24.2px;background:#fff;border:1px solid #c8c8c8;"></div>
<svg class="i" style="left:584px;top:381px;" width="18" height="18" viewBox="0 0 18 18"><circle cx="9" cy="9" r="6.4" fill="none" stroke="#b0b0b0" stroke-width="2.3"/></svg>
<div style="left:665.3px;top:376.6px;width:411px;height:24.2px;background:#fff;border:1px solid #c8c8c8;"></div>
<div style="left:1077px;top:376.3px;width:31.6px;height:26.4px;background:#42a5f5;"></div>
<span class="t" style="top:381px;font-size:16.5px;line-height:22px;letter-spacing:-0.187px;color:#fff;left:1086.12px;">...</span>
<span class="t" style="top:381px;font-size:16.5px;line-height:22px;letter-spacing:0.056px;color:#222;left:1179.4px;">Resubmission Code</span>
<div style="left:1332.5px;top:376.4px;width:209px;height:29.6px;background:#fff;border:1px solid #c8c8c8;border-radius:2px;"></div>
<span class="t" style="top:380px;font-size:14.67px;line-height:22px;letter-spacing:0.000px;color:#111;left:1340.2px;">Original Claim</span>
<svg class="i" style="left:1525.8px;top:387.45px;" width="14" height="9.5" viewBox="0 0 14 9.5"><polyline points="2,2 7,7.5 12,2" fill="none" stroke="#111" stroke-width="2.2" stroke-linecap="round" stroke-linejoin="round"/></svg>
<span class="t" style="top:379px;font-size:16.5px;line-height:22px;letter-spacing:0.157px;color:#222;left:1614.7px;">Original Ref.#:</span>
<div style="left:1727.2px;top:376.6px;width:160px;height:24.2px;background:#fff;border:1px solid #c8c8c8;"></div>
<div style="left:327px;top:408px;width:1560px;height:38.6px;border:1.3px solid #94c8f7;border-right:none;border-bottom:none;"></div>
<div style="left:1752px;top:415px;width:117.7px;height:30.6px;background:#27b94b;border-radius:3px;"></div>
<svg class="i" style="left:1764.2px;top:422.2px;" width="15.8" height="15.8" viewBox="0 0 16 16"><path d="M1.3 1.3 H11 L14.7 5 V14.7 H1.3 Z" fill="none" stroke="#fff" stroke-width="2" stroke-linejoin="round"/><path d="M4.3 1.6 V5.6 H10 V1.6" fill="none" stroke="#fff" stroke-width="1.7"/><path d="M4.2 14.6 V9.6 H11.8 V14.6" fill="none" stroke="#fff" stroke-width="1.7"/></svg>
<span class="t" style="top:419px;font-size:17.6px;line-height:22px;letter-spacing:-0.843px;color:#fff;left:1783.7px;"><u>S</u>ave Enc.</span>
<div style="left:0px;top:452.9px;width:1867.4px;height:382px;border:1.2px solid #94c8f7;border-bottom:none;background:#fff;"></div>
<div style="left:5px;top:458px;width:19.6px;height:37.7px;background:#cccccc;"></div>
<div style="left:25.8px;top:458px;width:89.9px;height:37.7px;background:#cccccc;"></div>
<div style="left:117px;top:458px;width:123.4px;height:37.7px;background:#cccccc;"></div>
<div style="left:241.7px;top:458px;width:123.7px;height:37.7px;background:#cccccc;"></div>
<div style="left:366.6px;top:458px;width:171.7px;height:37.7px;background:#cccccc;"></div>
<div style="left:539.3px;top:458px;width:34.4px;height:37.7px;background:#cccccc;"></div>
<div style="left:575px;top:458px;width:33.8px;height:37.7px;background:#cccccc;"></div>
<div style="left:610px;top:458px;width:34px;height:37.7px;background:#cccccc;"></div>
<div style="left:645.2px;top:458px;width:33.8px;height:37.7px;background:#cccccc;"></div>
<div style="left:680.3px;top:458px;width:49.7px;height:37.7px;background:#cccccc;"></div>
<div style="left:731.3px;top:458px;width:61.7px;height:37.7px;background:#cccccc;"></div>
<div style="left:794.2px;top:458px;width:86.8px;height:37.7px;background:#cccccc;"></div>
<div style="left:882.3px;top:458px;width:52.4px;height:37.7px;background:#cccccc;"></div>
<div style="left:936px;top:458px;width:43px;height:37.7px;background:#cccccc;"></div>
<div style="left:980px;top:458px;width:122px;height:37.7px;background:#cccccc;"></div>
<div style="left:1103.4px;top:458px;width:103.6px;height:37.7px;background:#cccccc;"></div>
<div style="left:1208.3px;top:458px;width:101.4px;height:37.7px;background:#cccccc;"></div>
<div style="left:1311px;top:458px;width:181.7px;height:37.7px;background:#cccccc;"></div>
<div style="left:1494.2px;top:458px;width:42.6px;height:37.7px;background:#cccccc;"></div>
<div style="left:1538.3px;top:458px;width:41.3px;height:37.7px;background:#cccccc;"></div>
<div style="left:1581px;top:458px;width:129.8px;height:37.7px;background:#cccccc;"></div>
<div style="left:1712.4px;top:458px;width:114.4px;height:37.7px;background:#cccccc;"></div>
<div style="left:1828.3px;top:458px;width:37.7px;height:37.7px;background:#cccccc;"></div>
<span class="t" style="top:466px;font-size:15.4px;line-height:22px;letter-spacing:0.637px;color:#1a6bb3;-webkit-text-stroke:0.5px #1a6bb3;left:8px;">#</span>
<span class="t" style="top:466px;font-size:15.4px;line-height:22px;letter-spacing:0.058px;color:#1a6bb3;-webkit-text-stroke:0.5px #1a6bb3;left:29.6px;">Proc. Code</span>
<span class="t" style="top:466px;font-size:15.4px;line-height:22px;letter-spacing:0.520px;color:#1a6bb3;-webkit-text-stroke:0.5px #1a6bb3;left:120.9px;">From</span>
<span class="t" style="top:466px;font-size:15.4px;line-height:22px;letter-spacing:1.217px;color:#1a6bb3;-webkit-text-stroke:0.5px #1a6bb3;left:245.6px;">To</span>
<span class="t" style="top:468px;font-size:15.4px;line-height:22px;letter-spacing:0.390px;color:#1a6bb3;-webkit-text-stroke:0.5px #1a6bb3;left:370.6px;">Diagnosis Pointer</span>
<svg class="i" style="left:502px;top:464.8px;" width="18.2" height="18.2" viewBox="0 0 18.2 18.2"><defs><radialGradient id="hg" cx="45%" cy="30%" r="75%"><stop offset="0" stop-color="#86a9d6"/><stop offset="1" stop-color="#5f8bc0"/></radialGradient></defs><circle cx="9.1" cy="9.1" r="8.9" fill="#b9d2f1"/><circle cx="9.1" cy="9.1" r="6.9" fill="url(#hg)"/><text x="9.1" y="13.3" font-size="11.5" font-weight="bold" font-family="Liberation Sans,sans-serif" text-anchor="middle" fill="#fff">?</text></svg>
<span class="t" style="top:465px;font-size:16.5px;line-height:22px;letter-spacing:-0.761px;color:#1a6bb3;left:543.8px;">M1</span>
<span class="t" style="top:465px;font-size:16.5px;line-height:22px;letter-spacing:0.539px;color:#1a6bb3;left:578.9px;">M2</span>
<span class="t" style="top:465px;font-size:16.5px;line-height:22px;letter-spacing:0.539px;color:#1a6bb3;left:614px;">M3</span>
<span class="t" style="top:465px;font-size:16.5px;line-height:22px;letter-spacing:0.639px;color:#1a6bb3;left:649.2px;">M4</span>
<span class="t" style="top:466px;font-size:15.4px;line-height:22px;letter-spacing:0.724px;color:#1a6bb3;-webkit-text-stroke:0.5px #1a6bb3;left:683.8px;">Units</span>
<span class="t" style="top:466px;font-size:15.4px;line-height:22px;letter-spacing:0.465px;color:#1a6bb3;-webkit-text-stroke:0.5px #1a6bb3;left:734.7px;">UOM</span>
<span class="t" style="top:465px;font-size:16.5px;line-height:22px;letter-spacing:0.078px;color:#e00;-webkit-text-stroke:0.5px #e00;left:775.5px;">*</span>
<span class="t" style="top:466px;font-size:15.4px;line-height:22px;letter-spacing:0.169px;color:#1a6bb3;-webkit-text-stroke:0.5px #1a6bb3;left:797.5px;">Charge</span>
<span class="t" style="top:466px;font-size:15.4px;line-height:22px;letter-spacing:0.854px;color:#1a6bb3;-webkit-text-stroke:0.5px #1a6bb3;left:886.2px;">Total</span>
<span class="t" style="top:466px;font-size:15.4px;line-height:22px;letter-spacing:0.222px;color:#1a6bb3;-webkit-text-stroke:0.5px #1a6bb3;left:940px;">Paid</span>
<span class="t" style="top:466px;font-size:15.4px;line-height:22px;letter-spacing:0.575px;color:#1a6bb3;-webkit-text-stroke:0.5px #1a6bb3;left:983.4px;">Adj. Amt.</span>
<span class="t" style="top:466px;font-size:15.4px;line-height:22px;letter-spacing:0.120px;color:#1a6bb3;-webkit-text-stroke:0.5px #1a6bb3;left:1106.8px;">Adj. Reason</span>
<span class="t" style="top:466px;font-size:15.4px;line-height:22px;letter-spacing:0.208px;color:#1a6bb3;-webkit-text-stroke:0.5px #1a6bb3;left:1212.2px;">Balance</span>
<span class="t" style="top:466px;font-size:15.4px;line-height:22px;letter-spacing:0.441px;color:#1a6bb3;-webkit-text-stroke:0.5px #1a6bb3;left:1315.1px;">Status</span>
<span class="t" style="top:466px;font-size:15.4px;line-height:22px;letter-spacing:-0.581px;color:#1a6bb3;-webkit-text-stroke:0.5px #1a6bb3;left:1498px;">COB</span>
<span class="t" style="top:466px;font-size:15.4px;line-height:22px;letter-spacing:0.021px;color:#1a6bb3;-webkit-text-stroke:0.5px #1a6bb3;left:1541.8px;">Rev.</span>
<span class="t" style="top:466px;font-size:15.4px;line-height:22px;letter-spacing:-1.188px;color:#1a6bb3;-webkit-text-stroke:0.5px #1a6bb3;left:1584.6px;">RP</span>
<span class="t" style="top:466px;font-size:15.4px;line-height:22px;letter-spacing:0.247px;color:#1a6bb3;-webkit-text-stroke:0.5px #1a6bb3;left:1715.2px;">Acct. Date</span>
<div style="left:5px;top:496.6px;width:19.6px;height:34.3px;background:#a9cff5;"></div>
<div style="left:25.8px;top:496.6px;width:89.9px;height:34.3px;background:#a9cff5;"></div>
<div style="left:117px;top:496.6px;width:123.4px;height:34.3px;background:#a9cff5;"></div>
<div style="left:241.7px;top:496.6px;width:123.7px;height:34.3px;background:#a9cff5;"></div>
<div style="left:366.6px;top:496.6px;width:41.9px;height:34.3px;background:#a9cff5;"></div>
<div style="left:409.8px;top:496.6px;width:42.2px;height:34.3px;background:#a9cff5;"></div>
<div style="left:453.2px;top:496.6px;width:41.8px;height:34.3px;background:#a9cff5;"></div>
<div style="left:496.4px;top:496.6px;width:41.9px;height:34.3px;background:#a9cff5;"></div>
<div style="left:539.3px;top:496.6px;width:34.4px;height:34.3px;background:#a9cff5;"></div>
<div style="left:575px;top:496.6px;width:33.8px;height:34.3px;background:#a9cff5;"></div>
<div style="left:610px;top:496.6px;width:34px;height:34.3px;background:#a9cff5;"></div>
<div style="left:645.2px;top:496.6px;width:33.8px;height:34.3px;background:#a9cff5;"></div>
<div style="left:680.3px;top:496.6px;width:49.7px;height:34.3px;background:#a9cff5;"></div>
<div style="left:731.3px;top:496.6px;width:61.7px;height:34.3px;background:#a9cff5;"></div>
<div style="left:794.2px;top:496.6px;width:86.8px;height:34.3px;background:#a9cff5;"></div>
<div style="left:882.3px;top:496.6px;width:52.4px;height:34.3px;background:#a9cff5;"></div>
<div style="left:936px;top:496.6px;width:43px;height:34.3px;background:#a9cff5;"></div>
<div style="left:980px;top:496.6px;width:34px;height:34.3px;background:#a9cff5;"></div>
<div style="left:1015.3px;top:496.6px;width:86.7px;height:34.3px;background:#a9cff5;"></div>
<div style="left:1103.4px;top:496.6px;width:103.6px;height:34.3px;background:#a9cff5;"></div>
<div style="left:1208.3px;top:496.6px;width:101.4px;height:34.3px;background:#a9cff5;"></div>
<div style="left:1311px;top:496.6px;width:181.7px;height:34.3px;background:#a9cff5;"></div>
<div style="left:1494.2px;top:496.6px;width:42.6px;height:34.3px;background:#a9cff5;"></div>
<div style="left:1538.3px;top:496.6px;width:41.3px;height:34.3px;background:#a9cff5;"></div>
<div style="left:1581px;top:496.6px;width:129.8px;height:34.3px;background:#a9cff5;"></div>
<div style="left:1712.4px;top:496.6px;width:114.4px;height:34.3px;background:#a9cff5;"></div>
<div style="left:1828.3px;top:496.6px;width:37.7px;height:34.3px;background:#a9cff5;"></div>
<span class="t" style="top:503px;font-size:16.5px;line-height:22px;letter-spacing:0.262px;color:#222;left:10.5px;">1</span>
<div style="left:26.2px;top:500.2px;width:67.2px;height:24.8px;background:#b3d4f6;border:1px solid #dde6f2;border-bottom:1.4px solid #1c1cf0;"></div>
<div style="left:30.6px;top:505.7px;width:41.2px;height:17.2px;background:#b4b4b4;"></div>
<span class="t" style="top:503px;font-size:14.67px;line-height:22px;letter-spacing:0.004px;color:#555;left:30.6px;">99002</span>
<div style="left:117.4px;top:500.2px;width:97px;height:25.2px;background:#fff;border:1px solid #d6d6d6;"></div>
<span class="t" style="top:503px;font-size:14.67px;line-height:22px;letter-spacing:0.439px;color:#111;left:121.7px;">01/02/2026</span>
<svg class="i" style="left:221.2px;top:505.8px;" width="15" height="16.2" viewBox="0 0 17 18.4"><rect x="0" y="3.1" width="17" height="15.3" rx="1.3" fill="#111"/><rect x="1.25" y="7.10" width="3.10" height="3.20" fill="#fff"/><rect x="4.85" y="7.10" width="3.40" height="3.20" fill="#fff"/><rect x="8.75" y="7.10" width="3.40" height="3.20" fill="#fff"/><rect x="12.65" y="7.10" width="3.10" height="3.20" fill="#fff"/><rect x="1.25" y="10.80" width="3.10" height="3.30" fill="#fff"/><rect x="4.85" y="10.80" width="3.40" height="3.30" fill="#fff"/><rect x="8.75" y="10.80" width="3.40" height="3.30" fill="#fff"/><rect x="12.65" y="10.80" width="3.10" height="3.30" fill="#fff"/><rect x="1.25" y="14.60" width="3.10" height="2.50" fill="#fff"/><rect x="4.85" y="14.60" width="3.40" height="2.50" fill="#fff"/><rect x="8.75" y="14.60" width="3.40" height="2.50" fill="#fff"/><rect x="12.65" y="14.60" width="3.10" height="2.50" fill="#fff"/><rect x="3.1" y="0.65" width="3.3" height="4.9" rx="1.65" fill="#fff" stroke="#111" stroke-width="1.3"/><rect x="10.7" y="0.65" width="3.3" height="4.9" rx="1.65" fill="#fff" stroke="#111" stroke-width="1.3"/></svg>
<div style="left:242.2px;top:500.2px;width:97.2px;height:25.2px;background:#fff;border:1px solid #d6d6d6;"></div>
<span class="t" style="top:503px;font-size:14.67px;line-height:22px;letter-spacing:0.469px;color:#111;left:246.4px;">01/02/2026</span>
<svg class="i" style="left:346.2px;top:505.8px;" width="15" height="16.2" viewBox="0 0 17 18.4"><rect x="0" y="3.1" width="17" height="15.3" rx="1.3" fill="#111"/><rect x="1.25" y="7.10" width="3.10" height="3.20" fill="#fff"/><rect x="4.85" y="7.10" width="3.40" height="3.20" fill="#fff"/><rect x="8.75" y="7.10" width="3.40" height="3.20" fill="#fff"/><rect x="12.65" y="7.10" width="3.10" height="3.20" fill="#fff"/><rect x="1.25" y="10.80" width="3.10" height="3.30" fill="#fff"/><rect x="4.85" y="10.80" width="3.40" height="3.30" fill="#fff"/><rect x="8.75" y="10.80" width="3.40" height="3.30" fill="#fff"/><rect x="12.65" y="10.80" width="3.10" height="3.30" fill="#fff"/><rect x="1.25" y="14.60" width="3.10" height="2.50" fill="#fff"/><rect x="4.85" y="14.60" width="3.40" height="2.50" fill="#fff"/><rect x="8.75" y="14.60" width="3.40" height="2.50" fill="#fff"/><rect x="12.65" y="14.60" width="3.10" height="2.50" fill="#fff"/><rect x="3.1" y="0.65" width="3.3" height="4.9" rx="1.65" fill="#fff" stroke="#111" stroke-width="1.3"/><rect x="10.7" y="0.65" width="3.3" height="4.9" rx="1.65" fill="#fff" stroke="#111" stroke-width="1.3"/></svg>
<div style="left:372px;top:500.2px;width:29.3px;height:25.2px;background:#fff;border:1px solid #d6d6d6;"></div>
<div style="left:415.3px;top:500.2px;width:29.3px;height:25.2px;background:#fff;border:1px solid #d6d6d6;"></div>
<div style="left:458.7px;top:500.2px;width:29.3px;height:25.2px;background:#fff;border:1px solid #d6d6d6;"></div>
<div style="left:501.4px;top:500.2px;width:29.3px;height:25.2px;background:#fff;border:1px solid #d6d6d6;"></div>
<span class="t" style="top:503px;font-size:14.67px;line-height:22px;letter-spacing:0.232px;color:#111;left:377.6px;">1</span>
<div style="left:541.5px;top:500.2px;width:28.2px;height:25.2px;background:#fff;border:1px solid #d6d6d6;"></div>
<div style="left:578.7px;top:500.2px;width:25.1px;height:25.2px;background:#fff;border:1px solid #d6d6d6;"></div>
<div style="left:613.6px;top:500.2px;width:25.1px;height:25.2px;background:#fff;border:1px solid #d6d6d6;"></div>
<div style="left:648.7px;top:500.2px;width:25.1px;height:25.2px;background:#fff;border:1px solid #d6d6d6;"></div>
<div style="left:689.6px;top:500.2px;width:28.9px;height:25.2px;background:#fff;border:1px solid #d6d6d6;"></div>
<span class="t" style="top:503px;font-size:14.67px;line-height:22px;letter-spacing:0.232px;color:#111;left:701.122px;">2</span>
<div style="left:732.3px;top:499.5px;width:56.4px;height:27px;background:#fff;border:1px solid #c8c8c8;border-radius:2px;"></div>
<svg class="i" style="left:773px;top:509.25px;" width="14" height="9.5" viewBox="0 0 14 9.5"><polyline points="2,2 7,7.5 12,2" fill="none" stroke="#111" stroke-width="2.2" stroke-linecap="round" stroke-linejoin="round"/></svg>
<span class="t" style="top:503px;font-size:12px;line-height:22px;letter-spacing:0.220px;color:#111;left:740.2px;max-width:27px;overflow:hidden;">UN</span>
<div style="left:795.5px;top:500.2px;width:82.1px;height:25.2px;background:#fff;border:1px solid #d6d6d6;"></div>
<span class="t" style="top:503px;font-size:14.67px;line-height:22px;letter-spacing:0.151px;color:#111;left:838.095px;">10.00</span>
<span class="t" style="top:503px;font-size:16.5px;line-height:22px;letter-spacing:0.173px;color:#222;left:892.444px;">20.00</span>
<span class="t" style="top:503px;font-size:16.5px;line-height:22px;letter-spacing:0.150px;color:#222;left:946.156px;">0.00</span>
<span class="t" style="top:503px;font-size:16.5px;line-height:22px;letter-spacing:0.150px;color:#222;left:980.756px;">0.00</span>
<div style="left:1016.8px;top:500.2px;width:81.6px;height:25.2px;background:#fff;border:1px solid #d6d6d6;"></div>
<span class="t" style="top:503px;font-size:14.67px;line-height:22px;letter-spacing:0.130px;color:#111;left:1067.16px;">0.00</span>
<div style="left:1105px;top:499.5px;width:98px;height:27px;background:#fff;border:1px solid #c8c8c8;border-radius:2px;"></div>
<svg class="i" style="left:1186.7px;top:509.25px;" width="14" height="9.5" viewBox="0 0 14 9.5"><polyline points="2,2 7,7.5 12,2" fill="none" stroke="#111" stroke-width="2.2" stroke-linecap="round" stroke-linejoin="round"/></svg>
<div style="left:1210px;top:500.2px;width:96.4px;height:25.2px;background:#c6daf6;border:1px solid #bccbe0;"></div>
<span class="t" style="top:503px;font-size:14.67px;line-height:22px;letter-spacing:0.151px;color:#111;left:1266.89px;">20.00</span>
<div style="left:1315.3px;top:499.5px;width:172.4px;height:27px;background:#fff;border:1px solid #c8c8c8;border-radius:2px;"></div>
<svg class="i" style="left:1472px;top:509.25px;" width="14" height="9.5" viewBox="0 0 14 9.5"><polyline points="2,2 7,7.5 12,2" fill="none" stroke="#111" stroke-width="2.2" stroke-linecap="round" stroke-linejoin="round"/></svg>
<span class="t" style="top:503px;font-size:12px;line-height:22px;letter-spacing:-0.560px;color:#111;left:1326.7px;">BILL_TO_PT</span>
<div style="left:1507px;top:503.6px;width:16.4px;height:16.4px;background:#fff;border:1.3px solid #767676;border-radius:3px;"></div>
<svg class="i" style="left:1550.6px;top:507.6px;" width="17.4" height="13.6" viewBox="0 0 21 17"><path d="M8.5 0.5 L0.5 7 L8.5 13.5 V9.6 C13.5 9.4 16.5 11 17.8 16.5 C20.5 9 16.5 4.2 8.5 4 Z" fill="#111a44"/></svg>
<div style="left:1582px;top:499.5px;width:121.3px;height:27px;background:#fff;border:1px solid #c8c8c8;border-radius:2px;"></div>
<svg class="i" style="left:1687.6px;top:509.25px;" width="14" height="9.5" viewBox="0 0 14 9.5"><polyline points="2,2 7,7.5 12,2" fill="none" stroke="#111" stroke-width="2.2" stroke-linecap="round" stroke-linejoin="round"/></svg>
<span class="t" style="top:503px;font-size:12px;line-height:22px;letter-spacing:-0.386px;color:#111;left:1592.2px;">63815D [Neighbo</span>
<div style="left:1713px;top:500.2px;width:86.7px;height:25.2px;background:#fff;border:1px solid #d6d6d6;"></div>
<span class="t" style="top:503px;font-size:14.67px;line-height:22px;letter-spacing:0.459px;color:#111;left:1715.8px;">02/02/2026</span>
<svg class="i" style="left:1807.1px;top:505.8px;" width="15.3" height="16.2" viewBox="0 0 17 18.4"><rect x="0" y="3.1" width="17" height="15.3" rx="1.3" fill="#111"/><rect x="1.25" y="7.10" width="3.10" height="3.20" fill="#fff"/><rect x="4.85" y="7.10" width="3.40" height="3.20" fill="#fff"/><rect x="8.75" y="7.10" width="3.40" height="3.20" fill="#fff"/><rect x="12.65" y="7.10" width="3.10" height="3.20" fill="#fff"/><rect x="1.25" y="10.80" width="3.10" height="3.30" fill="#fff"/><rect x="4.85" y="10.80" width="3.40" height="3.30" fill="#fff"/><rect x="8.75" y="10.80" width="3.40" height="3.30" fill="#fff"/><rect x="12.65" y="10.80" width="3.10" height="3.30" fill="#fff"/><rect x="1.25" y="14.60" width="3.10" height="2.50" fill="#fff"/><rect x="4.85" y="14.60" width="3.40" height="2.50" fill="#fff"/><rect x="8.75" y="14.60" width="3.40" height="2.50" fill="#fff"/><rect x="12.65" y="14.60" width="3.10" height="2.50" fill="#fff"/><rect x="3.1" y="0.65" width="3.3" height="4.9" rx="1.65" fill="#fff" stroke="#111" stroke-width="1.3"/><rect x="10.7" y="0.65" width="3.3" height="4.9" rx="1.65" fill="#fff" stroke="#111" stroke-width="1.3"/></svg>
<svg class="i" style="left:1828.8px;top:506.6px;" width="16.8" height="16" viewBox="0 0 16.8 16"><path d="M4.7 0.2 H15 Q15.8 0.2 15.5 1 L12.2 12.4 Q12 12.9 11.4 12.9 H1.6 Q0.8 12.9 1 12.2 L3.9 0.9 Q4.1 0.2 4.7 0.2 Z" fill="#333"/><path d="M1.1 12.6 Q-0.4 15.4 2.4 15.4 H12.4 Q13 15.4 13.2 14.8 L16.3 3.6" fill="none" stroke="#333" stroke-width="1.15" stroke-linecap="round"/><path d="M5.6 3.7 H13.4 M4.9 6.4 H12.7" stroke="#fff" stroke-width="1.25"/></svg>
<svg class="i" style="left:1850px;top:506.6px;opacity:0.2;" width="15" height="16.4" viewBox="0 0 15 16.4"><path d="M0.2 3.6 H14.8" stroke="#333" stroke-width="1.2"/><path d="M4.2 3.4 L5.2 0.7 H9.8 L10.8 3.4" fill="none" stroke="#333" stroke-width="1.15" stroke-linejoin="round"/><path d="M1.9 3.8 V14.3 Q1.9 15.8 3.4 15.8 H11.6 Q13.1 15.8 13.1 14.3 V3.8" fill="none" stroke="#333" stroke-width="1.25"/><path d="M4.8 6.2 V12.8 M7.5 6.2 V12.8 M10.2 6.2 V12.8" stroke="#333" stroke-width="1.2"/></svg>
<div style="left:5px;top:532.1px;width:19.6px;height:34.3px;background:#e1e5ee;"></div>
<div style="left:25.8px;top:532.1px;width:89.9px;height:34.3px;background:#e1e5ee;"></div>
<div style="left:117px;top:532.1px;width:123.4px;height:34.3px;background:#e1e5ee;"></div>
<div style="left:241.7px;top:532.1px;width:123.7px;height:34.3px;background:#e1e5ee;"></div>
<div style="left:366.6px;top:532.1px;width:41.9px;height:34.3px;background:#e1e5ee;"></div>
<div style="left:409.8px;top:532.1px;width:42.2px;height:34.3px;background:#e1e5ee;"></div>
<div style="left:453.2px;top:532.1px;width:41.8px;height:34.3px;background:#e1e5ee;"></div>
<div style="left:496.4px;top:532.1px;width:41.9px;height:34.3px;background:#e1e5ee;"></div>
<div style="left:539.3px;top:532.1px;width:34.4px;height:34.3px;background:#e1e5ee;"></div>
<div style="left:575px;top:532.1px;width:33.8px;height:34.3px;background:#e1e5ee;"></div>
<div style="left:610px;top:532.1px;width:34px;height:34.3px;background:#e1e5ee;"></div>
<div style="left:645.2px;top:532.1px;width:33.8px;height:34.3px;background:#e1e5ee;"></div>
<div style="left:680.3px;top:532.1px;width:49.7px;height:34.3px;background:#e1e5ee;"></div>
<div style="left:731.3px;top:532.1px;width:61.7px;height:34.3px;background:#e1e5ee;"></div>
<div style="left:794.2px;top:532.1px;width:86.8px;height:34.3px;background:#e1e5ee;"></div>
<div style="left:882.3px;top:532.1px;width:52.4px;height:34.3px;background:#e1e5ee;"></div>
<div style="left:936px;top:532.1px;width:43px;height:34.3px;background:#e1e5ee;"></div>
<div style="left:980px;top:532.1px;width:34px;height:34.3px;background:#e1e5ee;"></div>
<div style="left:1015.3px;top:532.1px;width:86.7px;height:34.3px;background:#e1e5ee;"></div>
<div style="left:1103.4px;top:532.1px;width:103.6px;height:34.3px;background:#e1e5ee;"></div>
<div style="left:1208.3px;top:532.1px;width:101.4px;height:34.3px;background:#e1e5ee;"></div>
<div style="left:1311px;top:532.1px;width:181.7px;height:34.3px;background:#e1e5ee;"></div>
<div style="left:1494.2px;top:532.1px;width:42.6px;height:34.3px;background:#e1e5ee;"></div>
<div style="left:1538.3px;top:532.1px;width:41.3px;height:34.3px;background:#e1e5ee;"></div>
<div style="left:1581px;top:532.1px;width:129.8px;height:34.3px;background:#e1e5ee;"></div>
<div style="left:1712.4px;top:532.1px;width:114.4px;height:34.3px;background:#e1e5ee;"></div>
<div style="left:1828.3px;top:532.1px;width:37.7px;height:34.3px;background:#e1e5ee;"></div>
<span class="t" style="top:538px;font-size:16.5px;line-height:22px;letter-spacing:0.262px;color:#222;left:10.5px;">2</span>
<div style="left:26.2px;top:535.7px;width:67.2px;height:24.8px;background:#e1e5ee;border:1px solid #e6e3dc;border-bottom:1.4px solid #1c1cf0;"></div>
<span class="t" style="top:538px;font-size:14.67px;line-height:22px;letter-spacing:0.000px;color:#111;left:30.6px;">97001</span>
<div style="left:117.4px;top:535.7px;width:97px;height:25.2px;background:#fff;border:1px solid #d6d6d6;"></div>
<span class="t" style="top:538px;font-size:14.67px;line-height:22px;letter-spacing:0.439px;color:#111;left:121.7px;">01/02/2026</span>
<svg class="i" style="left:221.2px;top:541.3px;" width="15" height="16.2" viewBox="0 0 17 18.4"><rect x="0" y="3.1" width="17" height="15.3" rx="1.3" fill="#111"/><rect x="1.25" y="7.10" width="3.10" height="3.20" fill="#fff"/><rect x="4.85" y="7.10" width="3.40" height="3.20" fill="#fff"/><rect x="8.75" y="7.10" width="3.40" height="3.20" fill="#fff"/><rect x="12.65" y="7.10" width="3.10" height="3.20" fill="#fff"/><rect x="1.25" y="10.80" width="3.10" height="3.30" fill="#fff"/><rect x="4.85" y="10.80" width="3.40" height="3.30" fill="#fff"/><rect x="8.75" y="10.80" width="3.40" height="3.30" fill="#fff"/><rect x="12.65" y="10.80" width="3.10" height="3.30" fill="#fff"/><rect x="1.25" y="14.60" width="3.10" height="2.50" fill="#fff"/><rect x="4.85" y="14.60" width="3.40" height="2.50" fill="#fff"/><rect x="8.75" y="14.60" width="3.40" height="2.50" fill="#fff"/><rect x="12.65" y="14.60" width="3.10" height="2.50" fill="#fff"/><rect x="3.1" y="0.65" width="3.3" height="4.9" rx="1.65" fill="#fff" stroke="#111" stroke-width="1.3"/><rect x="10.7" y="0.65" width="3.3" height="4.9" rx="1.65" fill="#fff" stroke="#111" stroke-width="1.3"/></svg>
<div style="left:242.2px;top:535.7px;width:97.2px;height:25.2px;background:#fff;border:1px solid #d6d6d6;"></div>
<span class="t" style="top:538px;font-size:14.67px;line-height:22px;letter-spacing:0.469px;color:#111;left:246.4px;">01/02/2026</span>
<svg class="i" style="left:346.2px;top:541.3px;" width="15" height="16.2" viewBox="0 0 17 18.4"><rect x="0" y="3.1" width="17" height="15.3" rx="1.3" fill="#111"/><rect x="1.25" y="7.10" width="3.10" height="3.20" fill="#fff"/><rect x="4.85" y="7.10" width="3.40" height="3.20" fill="#fff"/><rect x="8.75" y="7.10" width="3.40" height="3.20" fill="#fff"/><rect x="12.65" y="7.10" width="3.10" height="3.20" fill="#fff"/><rect x="1.25" y="10.80" width="3.10" height="3.30" fill="#fff"/><rect x="4.85" y="10.80" width="3.40" height="3.30" fill="#fff"/><rect x="8.75" y="10.80" width="3.40" height="3.30" fill="#fff"/><rect x="12.65" y="10.80" width="3.10" height="3.30" fill="#fff"/><rect x="1.25" y="14.60" width="3.10" height="2.50" fill="#fff"/><rect x="4.85" y="14.60" width="3.40" height="2.50" fill="#fff"/><rect x="8.75" y="14.60" width="3.40" height="2.50" fill="#fff"/><rect x="12.65" y="14.60" width="3.10" height="2.50" fill="#fff"/><rect x="3.1" y="0.65" width="3.3" height="4.9" rx="1.65" fill="#fff" stroke="#111" stroke-width="1.3"/><rect x="10.7" y="0.65" width="3.3" height="4.9" rx="1.65" fill="#fff" stroke="#111" stroke-width="1.3"/></svg>
<div style="left:372px;top:535.7px;width:29.3px;height:25.2px;background:#fff;border:1px solid #d6d6d6;"></div>
<div style="left:415.3px;top:535.7px;width:29.3px;height:25.2px;background:#fff;border:1px solid #d6d6d6;"></div>
<div style="left:458.7px;top:535.7px;width:29.3px;height:25.2px;background:#fff;border:1px solid #d6d6d6;"></div>
<div style="left:501.4px;top:535.7px;width:29.3px;height:25.2px;background:#fff;border:1px solid #d6d6d6;"></div>
<span class="t" style="top:538px;font-size:14.67px;line-height:22px;letter-spacing:0.232px;color:#111;left:377.6px;">1</span>
<div style="left:541.5px;top:535.7px;width:28.2px;height:25.2px;background:#fff;border:1px solid #d6d6d6;"></div>
<div style="left:578.7px;top:535.7px;width:25.1px;height:25.2px;background:#fff;border:1px solid #d6d6d6;"></div>
<div style="left:613.6px;top:535.7px;width:25.1px;height:25.2px;background:#fff;border:1px solid #d6d6d6;"></div>
<div style="left:648.7px;top:535.7px;width:25.1px;height:25.2px;background:#fff;border:1px solid #d6d6d6;"></div>
<div style="left:689.6px;top:535.7px;width:28.9px;height:25.2px;background:#fff;border:1px solid #d6d6d6;"></div>
<span class="t" style="top:538px;font-size:14.67px;line-height:22px;letter-spacing:0.232px;color:#111;left:701.122px;">3</span>
<div style="left:732.3px;top:535px;width:56.4px;height:27px;background:#fff;border:1px solid #c8c8c8;border-radius:2px;"></div>
<svg class="i" style="left:773px;top:544.75px;" width="14" height="9.5" viewBox="0 0 14 9.5"><polyline points="2,2 7,7.5 12,2" fill="none" stroke="#111" stroke-width="2.2" stroke-linecap="round" stroke-linejoin="round"/></svg>
<span class="t" style="top:539px;font-size:12px;line-height:22px;letter-spacing:0.220px;color:#111;left:740.2px;max-width:27px;overflow:hidden;">UN</span>
<div style="left:795.5px;top:535.7px;width:82.1px;height:25.2px;background:#fff;border:1px solid #d6d6d6;"></div>
<span class="t" style="top:538px;font-size:14.67px;line-height:22px;letter-spacing:0.151px;color:#111;left:838.095px;">73.66</span>
<span class="t" style="top:538px;font-size:16.5px;line-height:22px;letter-spacing:0.188px;color:#222;left:883.025px;">220.98</span>
<span class="t" style="top:538px;font-size:16.5px;line-height:22px;letter-spacing:0.150px;color:#222;left:946.156px;">0.00</span>
<span class="t" style="top:538px;font-size:16.5px;line-height:22px;letter-spacing:0.150px;color:#222;left:980.756px;">0.00</span>
<div style="left:1016.8px;top:535.7px;width:81.6px;height:25.2px;background:#fff;border:1px solid #d6d6d6;"></div>
<span class="t" style="top:538px;font-size:14.67px;line-height:22px;letter-spacing:0.130px;color:#111;left:1067.16px;">0.00</span>
<div style="left:1105px;top:535px;width:98px;height:27px;background:#fff;border:1px solid #c8c8c8;border-radius:2px;"></div>
<svg class="i" style="left:1186.7px;top:544.75px;" width="14" height="9.5" viewBox="0 0 14 9.5"><polyline points="2,2 7,7.5 12,2" fill="none" stroke="#111" stroke-width="2.2" stroke-linecap="round" stroke-linejoin="round"/></svg>
<div style="left:1210px;top:535.7px;width:96.4px;height:25.2px;background:#c6daf6;border:1px solid #bccbe0;"></div>
<span class="t" style="top:538px;font-size:14.67px;line-height:22px;letter-spacing:0.164px;color:#111;left:1258.52px;">220.98</span>
<div style="left:1315.3px;top:535px;width:172.4px;height:27px;background:#fff;border:1px solid #c8c8c8;border-radius:2px;"></div>
<svg class="i" style="left:1472px;top:544.75px;" width="14" height="9.5" viewBox="0 0 14 9.5"><polyline points="2,2 7,7.5 12,2" fill="none" stroke="#111" stroke-width="2.2" stroke-linecap="round" stroke-linejoin="round"/></svg>
<span class="t" style="top:539px;font-size:12px;line-height:22px;letter-spacing:-0.390px;color:#111;left:1326.7px;">NEW</span>
<div style="left:1507px;top:539.1px;width:16.4px;height:16.4px;background:#fff;border:1.3px solid #767676;border-radius:3px;"></div>
<svg class="i" style="left:1550.6px;top:543.1px;" width="17.4" height="13.6" viewBox="0 0 21 17"><path d="M8.5 0.5 L0.5 7 L8.5 13.5 V9.6 C13.5 9.4 16.5 11 17.8 16.5 C20.5 9 16.5 4.2 8.5 4 Z" fill="#111a44"/></svg>
<div style="left:1582px;top:535px;width:121.3px;height:27px;background:#fff;border:1px solid #c8c8c8;border-radius:2px;"></div>
<svg class="i" style="left:1687.6px;top:544.75px;" width="14" height="9.5" viewBox="0 0 14 9.5"><polyline points="2,2 7,7.5 12,2" fill="none" stroke="#111" stroke-width="2.2" stroke-linecap="round" stroke-linejoin="round"/></svg>
<span class="t" style="top:539px;font-size:12px;line-height:22px;letter-spacing:-0.386px;color:#111;left:1592.2px;">63815D [Neighbo</span>
<div style="left:1713px;top:535.7px;width:86.7px;height:25.2px;background:#fff;border:1px solid #d6d6d6;"></div>
<span class="t" style="top:538px;font-size:14.67px;line-height:22px;letter-spacing:0.459px;color:#111;left:1715.8px;">02/02/2026</span>
<svg class="i" style="left:1807.1px;top:541.3px;" width="15.3" height="16.2" viewBox="0 0 17 18.4"><rect x="0" y="3.1" width="17" height="15.3" rx="1.3" fill="#111"/><rect x="1.25" y="7.10" width="3.10" height="3.20" fill="#fff"/><rect x="4.85" y="7.10" width="3.40" height="3.20" fill="#fff"/><rect x="8.75" y="7.10" width="3.40" height="3.20" fill="#fff"/><rect x="12.65" y="7.10" width="3.10" height="3.20" fill="#fff"/><rect x="1.25" y="10.80" width="3.10" height="3.30" fill="#fff"/><rect x="4.85" y="10.80" width="3.40" height="3.30" fill="#fff"/><rect x="8.75" y="10.80" width="3.40" height="3.30" fill="#fff"/><rect x="12.65" y="10.80" width="3.10" height="3.30" fill="#fff"/><rect x="1.25" y="14.60" width="3.10" height="2.50" fill="#fff"/><rect x="4.85" y="14.60" width="3.40" height="2.50" fill="#fff"/><rect x="8.75" y="14.60" width="3.40" height="2.50" fill="#fff"/><rect x="12.65" y="14.60" width="3.10" height="2.50" fill="#fff"/><rect x="3.1" y="0.65" width="3.3" height="4.9" rx="1.65" fill="#fff" stroke="#111" stroke-width="1.3"/><rect x="10.7" y="0.65" width="3.3" height="4.9" rx="1.65" fill="#fff" stroke="#111" stroke-width="1.3"/></svg>
<svg class="i" style="left:1828.8px;top:542.1px;" width="16.8" height="16" viewBox="0 0 16.8 16"><path d="M4.7 0.2 H15 Q15.8 0.2 15.5 1 L12.2 12.4 Q12 12.9 11.4 12.9 H1.6 Q0.8 12.9 1 12.2 L3.9 0.9 Q4.1 0.2 4.7 0.2 Z" fill="#333"/><path d="M1.1 12.6 Q-0.4 15.4 2.4 15.4 H12.4 Q13 15.4 13.2 14.8 L16.3 3.6" fill="none" stroke="#333" stroke-width="1.15" stroke-linecap="round"/><path d="M5.6 3.7 H13.4 M4.9 6.4 H12.7" stroke="#fff" stroke-width="1.25"/></svg>
<svg class="i" style="left:1850px;top:542.1px;opacity:1;" width="15" height="16.4" viewBox="0 0 15 16.4"><path d="M0.2 3.6 H14.8" stroke="#333" stroke-width="1.2"/><path d="M4.2 3.4 L5.2 0.7 H9.8 L10.8 3.4" fill="none" stroke="#333" stroke-width="1.15" stroke-linejoin="round"/><path d="M1.9 3.8 V14.3 Q1.9 15.8 3.4 15.8 H11.6 Q13.1 15.8 13.1 14.3 V3.8" fill="none" stroke="#333" stroke-width="1.25"/><path d="M4.8 6.2 V12.8 M7.5 6.2 V12.8 M10.2 6.2 V12.8" stroke="#333" stroke-width="1.2"/></svg>
<div style="left:5px;top:567.7px;width:19.6px;height:34.3px;background:#ffffff;"></div>
<div style="left:25.8px;top:567.7px;width:89.9px;height:34.3px;background:#ffffff;"></div>
<div style="left:117px;top:567.7px;width:123.4px;height:34.3px;background:#ffffff;"></div>
<div style="left:241.7px;top:567.7px;width:123.7px;height:34.3px;background:#ffffff;"></div>
<div style="left:366.6px;top:567.7px;width:41.9px;height:34.3px;background:#ffffff;"></div>
<div style="left:409.8px;top:567.7px;width:42.2px;height:34.3px;background:#ffffff;"></div>
<div style="left:453.2px;top:567.7px;width:41.8px;height:34.3px;background:#ffffff;"></div>
<div style="left:496.4px;top:567.7px;width:41.9px;height:34.3px;background:#ffffff;"></div>
<div style="left:539.3px;top:567.7px;width:34.4px;height:34.3px;background:#ffffff;"></div>
<div style="left:575px;top:567.7px;width:33.8px;height:34.3px;background:#ffffff;"></div>
<div style="left:610px;top:567.7px;width:34px;height:34.3px;background:#ffffff;"></div>
<div style="left:645.2px;top:567.7px;width:33.8px;height:34.3px;background:#ffffff;"></div>
<div style="left:680.3px;top:567.7px;width:49.7px;height:34.3px;background:#ffffff;"></div>
<div style="left:731.3px;top:567.7px;width:61.7px;height:34.3px;background:#ffffff;"></div>
<div style="left:794.2px;top:567.7px;width:86.8px;height:34.3px;background:#ffffff;"></div>
<div style="left:882.3px;top:567.7px;width:52.4px;height:34.3px;background:#ffffff;"></div>
<div style="left:936px;top:567.7px;width:43px;height:34.3px;background:#ffffff;"></div>
<div style="left:980px;top:567.7px;width:34px;height:34.3px;background:#ffffff;"></div>
<div style="left:1015.3px;top:567.7px;width:86.7px;height:34.3px;background:#ffffff;"></div>
<div style="left:1103.4px;top:567.7px;width:103.6px;height:34.3px;background:#ffffff;"></div>
<div style="left:1208.3px;top:567.7px;width:101.4px;height:34.3px;background:#ffffff;"></div>
<div style="left:1311px;top:567.7px;width:181.7px;height:34.3px;background:#ffffff;"></div>
<div style="left:1494.2px;top:567.7px;width:42.6px;height:34.3px;background:#ffffff;"></div>
<div style="left:1538.3px;top:567.7px;width:41.3px;height:34.3px;background:#ffffff;"></div>
<div style="left:1581px;top:567.7px;width:129.8px;height:34.3px;background:#ffffff;"></div>
<div style="left:1712.4px;top:567.7px;width:114.4px;height:34.3px;background:#ffffff;"></div>
<div style="left:1828.3px;top:567.7px;width:37.7px;height:34.3px;background:#ffffff;"></div>
<span class="t" style="top:574px;font-size:16.5px;line-height:22px;letter-spacing:0.262px;color:#222;left:10.5px;">3</span>
<div style="left:26.2px;top:571.3px;width:67.2px;height:24.8px;background:#fff;border:1px solid #e6e3dc;border-bottom:1.4px solid #1c1cf0;"></div>
<span class="t" style="top:574px;font-size:14.67px;line-height:22px;letter-spacing:0.000px;color:#111;left:30.6px;">9000</span>
<div style="left:117.4px;top:571.3px;width:97px;height:25.2px;background:#fff;border:1px solid #d6d6d6;"></div>
<span class="t" style="top:574px;font-size:14.67px;line-height:22px;letter-spacing:0.439px;color:#111;left:121.7px;">01/02/2026</span>
<svg class="i" style="left:221.2px;top:576.9px;" width="15" height="16.2" viewBox="0 0 17 18.4"><rect x="0" y="3.1" width="17" height="15.3" rx="1.3" fill="#111"/><rect x="1.25" y="7.10" width="3.10" height="3.20" fill="#fff"/><rect x="4.85" y="7.10" width="3.40" height="3.20" fill="#fff"/><rect x="8.75" y="7.10" width="3.40" height="3.20" fill="#fff"/><rect x="12.65" y="7.10" width="3.10" height="3.20" fill="#fff"/><rect x="1.25" y="10.80" width="3.10" height="3.30" fill="#fff"/><rect x="4.85" y="10.80" width="3.40" height="3.30" fill="#fff"/><rect x="8.75" y="10.80" width="3.40" height="3.30" fill="#fff"/><rect x="12.65" y="10.80" width="3.10" height="3.30" fill="#fff"/><rect x="1.25" y="14.60" width="3.10" height="2.50" fill="#fff"/><rect x="4.85" y="14.60" width="3.40" height="2.50" fill="#fff"/><rect x="8.75" y="14.60" width="3.40" height="2.50" fill="#fff"/><rect x="12.65" y="14.60" width="3.10" height="2.50" fill="#fff"/><rect x="3.1" y="0.65" width="3.3" height="4.9" rx="1.65" fill="#fff" stroke="#111" stroke-width="1.3"/><rect x="10.7" y="0.65" width="3.3" height="4.9" rx="1.65" fill="#fff" stroke="#111" stroke-width="1.3"/></svg>
<div style="left:242.2px;top:571.3px;width:97.2px;height:25.2px;background:#fff;border:1px solid #d6d6d6;"></div>
<span class="t" style="top:574px;font-size:14.67px;line-height:22px;letter-spacing:0.469px;color:#111;left:246.4px;">01/02/2026</span>
<svg class="i" style="left:346.2px;top:576.9px;" width="15" height="16.2" viewBox="0 0 17 18.4"><rect x="0" y="3.1" width="17" height="15.3" rx="1.3" fill="#111"/><rect x="1.25" y="7.10" width="3.10" height="3.20" fill="#fff"/><rect x="4.85" y="7.10" width="3.40" height="3.20" fill="#fff"/><rect x="8.75" y="7.10" width="3.40" height="3.20" fill="#fff"/><rect x="12.65" y="7.10" width="3.10" height="3.20" fill="#fff"/><rect x="1.25" y="10.80" width="3.10" height="3.30" fill="#fff"/><rect x="4.85" y="10.80" width="3.40" height="3.30" fill="#fff"/><rect x="8.75" y="10.80" width="3.40" height="3.30" fill="#fff"/><rect x="12.65" y="10.80" width="3.10" height="3.30" fill="#fff"/><rect x="1.25" y="14.60" width="3.10" height="2.50" fill="#fff"/><rect x="4.85" y="14.60" width="3.40" height="2.50" fill="#fff"/><rect x="8.75" y="14.60" width="3.40" height="2.50" fill="#fff"/><rect x="12.65" y="14.60" width="3.10" height="2.50" fill="#fff"/><rect x="3.1" y="0.65" width="3.3" height="4.9" rx="1.65" fill="#fff" stroke="#111" stroke-width="1.3"/><rect x="10.7" y="0.65" width="3.3" height="4.9" rx="1.65" fill="#fff" stroke="#111" stroke-width="1.3"/></svg>
<div style="left:372px;top:571.3px;width:29.3px;height:25.2px;background:#fff;border:1px solid #d6d6d6;"></div>
<div style="left:415.3px;top:571.3px;width:29.3px;height:25.2px;background:#fff;border:1px solid #d6d6d6;"></div>
<div style="left:458.7px;top:571.3px;width:29.3px;height:25.2px;background:#fff;border:1px solid #d6d6d6;"></div>
<div style="left:501.4px;top:571.3px;width:29.3px;height:25.2px;background:#fff;border:1px solid #d6d6d6;"></div>
<span class="t" style="top:574px;font-size:14.67px;line-height:22px;letter-spacing:0.232px;color:#111;left:377.6px;">1</span>
<div style="left:541.5px;top:571.3px;width:28.2px;height:25.2px;background:#fff;border:1px solid #d6d6d6;"></div>
<div style="left:578.7px;top:571.3px;width:25.1px;height:25.2px;background:#fff;border:1px solid #d6d6d6;"></div>
<div style="left:613.6px;top:571.3px;width:25.1px;height:25.2px;background:#fff;border:1px solid #d6d6d6;"></div>
<div style="left:648.7px;top:571.3px;width:25.1px;height:25.2px;background:#fff;border:1px solid #d6d6d6;"></div>
<div style="left:689.6px;top:571.3px;width:28.9px;height:25.2px;background:#fff;border:1px solid #d6d6d6;"></div>
<span class="t" style="top:574px;font-size:14.67px;line-height:22px;letter-spacing:0.232px;color:#111;left:701.122px;">5</span>
<div style="left:732.3px;top:570.6px;width:56.4px;height:27px;background:#fff;border:1px solid #c8c8c8;border-radius:2px;"></div>
<svg class="i" style="left:773px;top:580.35px;" width="14" height="9.5" viewBox="0 0 14 9.5"><polyline points="2,2 7,7.5 12,2" fill="none" stroke="#111" stroke-width="2.2" stroke-linecap="round" stroke-linejoin="round"/></svg>
<span class="t" style="top:574px;font-size:12px;line-height:22px;letter-spacing:0.220px;color:#111;left:740.2px;max-width:27px;overflow:hidden;">UN</span>
<div style="left:795.5px;top:571.3px;width:82.1px;height:25.2px;background:#fff;border:1px solid #d6d6d6;"></div>
<span class="t" style="top:574px;font-size:14.67px;line-height:22px;letter-spacing:0.164px;color:#111;left:829.72px;">123.00</span>
<span class="t" style="top:574px;font-size:16.5px;line-height:22px;letter-spacing:0.188px;color:#222;left:883.025px;">615.00</span>
<span class="t" style="top:574px;font-size:16.5px;line-height:22px;letter-spacing:0.150px;color:#222;left:946.156px;">0.00</span>
<span class="t" style="top:574px;font-size:16.5px;line-height:22px;letter-spacing:0.150px;color:#222;left:980.756px;">0.00</span>
<div style="left:1016.8px;top:571.3px;width:81.6px;height:25.2px;background:#fff;border:1px solid #d6d6d6;"></div>
<span class="t" style="top:574px;font-size:14.67px;line-height:22px;letter-spacing:0.130px;color:#111;left:1067.16px;">0.00</span>
<div style="left:1105px;top:570.6px;width:98px;height:27px;background:#fff;border:1px solid #c8c8c8;border-radius:2px;"></div>
<svg class="i" style="left:1186.7px;top:580.35px;" width="14" height="9.5" viewBox="0 0 14 9.5"><polyline points="2,2 7,7.5 12,2" fill="none" stroke="#111" stroke-width="2.2" stroke-linecap="round" stroke-linejoin="round"/></svg>
<div style="left:1210px;top:571.3px;width:96.4px;height:25.2px;background:#c6daf6;border:1px solid #bccbe0;"></div>
<span class="t" style="top:574px;font-size:14.67px;line-height:22px;letter-spacing:0.164px;color:#111;left:1258.52px;">615.00</span>
<div style="left:1315.3px;top:570.6px;width:172.4px;height:27px;background:#fff;border:1px solid #c8c8c8;border-radius:2px;"></div>
<svg class="i" style="left:1472px;top:580.35px;" width="14" height="9.5" viewBox="0 0 14 9.5"><polyline points="2,2 7,7.5 12,2" fill="none" stroke="#111" stroke-width="2.2" stroke-linecap="round" stroke-linejoin="round"/></svg>
<span class="t" style="top:574px;font-size:12px;line-height:22px;letter-spacing:-0.390px;color:#111;left:1326.7px;">NEW</span>
<div style="left:1507px;top:574.7px;width:16.4px;height:16.4px;background:#fff;border:1.3px solid #767676;border-radius:3px;"></div>
<svg class="i" style="left:1550.6px;top:578.7px;" width="17.4" height="13.6" viewBox="0 0 21 17"><path d="M8.5 0.5 L0.5 7 L8.5 13.5 V9.6 C13.5 9.4 16.5 11 17.8 16.5 C20.5 9 16.5 4.2 8.5 4 Z" fill="#111a44"/></svg>
<div style="left:1582px;top:570.6px;width:121.3px;height:27px;background:#fff;border:1px solid #c8c8c8;border-radius:2px;"></div>
<svg class="i" style="left:1687.6px;top:580.35px;" width="14" height="9.5" viewBox="0 0 14 9.5"><polyline points="2,2 7,7.5 12,2" fill="none" stroke="#111" stroke-width="2.2" stroke-linecap="round" stroke-linejoin="round"/></svg>
<span class="t" style="top:574px;font-size:12px;line-height:22px;letter-spacing:-0.386px;color:#111;left:1592.2px;">63815D [Neighbo</span>
<div style="left:1713px;top:571.3px;width:86.7px;height:25.2px;background:#fff;border:1px solid #d6d6d6;"></div>
<span class="t" style="top:574px;font-size:14.67px;line-height:22px;letter-spacing:0.459px;color:#111;left:1715.8px;">02/02/2026</span>
<svg class="i" style="left:1807.1px;top:576.9px;" width="15.3" height="16.2" viewBox="0 0 17 18.4"><rect x="0" y="3.1" width="17" height="15.3" rx="1.3" fill="#111"/><rect x="1.25" y="7.10" width="3.10" height="3.20" fill="#fff"/><rect x="4.85" y="7.10" width="3.40" height="3.20" fill="#fff"/><rect x="8.75" y="7.10" width="3.40" height="3.20" fill="#fff"/><rect x="12.65" y="7.10" width="3.10" height="3.20" fill="#fff"/><rect x="1.25" y="10.80" width="3.10" height="3.30" fill="#fff"/><rect x="4.85" y="10.80" width="3.40" height="3.30" fill="#fff"/><rect x="8.75" y="10.80" width="3.40" height="3.30" fill="#fff"/><rect x="12.65" y="10.80" width="3.10" height="3.30" fill="#fff"/><rect x="1.25" y="14.60" width="3.10" height="2.50" fill="#fff"/><rect x="4.85" y="14.60" width="3.40" height="2.50" fill="#fff"/><rect x="8.75" y="14.60" width="3.40" height="2.50" fill="#fff"/><rect x="12.65" y="14.60" width="3.10" height="2.50" fill="#fff"/><rect x="3.1" y="0.65" width="3.3" height="4.9" rx="1.65" fill="#fff" stroke="#111" stroke-width="1.3"/><rect x="10.7" y="0.65" width="3.3" height="4.9" rx="1.65" fill="#fff" stroke="#111" stroke-width="1.3"/></svg>
<svg class="i" style="left:1828.8px;top:577.7px;" width="16.8" height="16" viewBox="0 0 16.8 16"><path d="M4.7 0.2 H15 Q15.8 0.2 15.5 1 L12.2 12.4 Q12 12.9 11.4 12.9 H1.6 Q0.8 12.9 1 12.2 L3.9 0.9 Q4.1 0.2 4.7 0.2 Z" fill="#333"/><path d="M1.1 12.6 Q-0.4 15.4 2.4 15.4 H12.4 Q13 15.4 13.2 14.8 L16.3 3.6" fill="none" stroke="#333" stroke-width="1.15" stroke-linecap="round"/><path d="M5.6 3.7 H13.4 M4.9 6.4 H12.7" stroke="#fff" stroke-width="1.25"/></svg>
<svg class="i" style="left:1850px;top:577.7px;opacity:1;" width="15" height="16.4" viewBox="0 0 15 16.4"><path d="M0.2 3.6 H14.8" stroke="#333" stroke-width="1.2"/><path d="M4.2 3.4 L5.2 0.7 H9.8 L10.8 3.4" fill="none" stroke="#333" stroke-width="1.15" stroke-linejoin="round"/><path d="M1.9 3.8 V14.3 Q1.9 15.8 3.4 15.8 H11.6 Q13.1 15.8 13.1 14.3 V3.8" fill="none" stroke="#333" stroke-width="1.25"/><path d="M4.8 6.2 V12.8 M7.5 6.2 V12.8 M10.2 6.2 V12.8" stroke="#333" stroke-width="1.2"/></svg>
<div style="left:5px;top:603.2px;width:19.6px;height:34.3px;background:#e1e5ee;"></div>
<div style="left:25.8px;top:603.2px;width:89.9px;height:34.3px;background:#e1e5ee;"></div>
<div style="left:117px;top:603.2px;width:123.4px;height:34.3px;background:#e1e5ee;"></div>
<div style="left:241.7px;top:603.2px;width:123.7px;height:34.3px;background:#e1e5ee;"></div>
<div style="left:366.6px;top:603.2px;width:41.9px;height:34.3px;background:#e1e5ee;"></div>
<div style="left:409.8px;top:603.2px;width:42.2px;height:34.3px;background:#e1e5ee;"></div>
<div style="left:453.2px;top:603.2px;width:41.8px;height:34.3px;background:#e1e5ee;"></div>
<div style="left:496.4px;top:603.2px;width:41.9px;height:34.3px;background:#e1e5ee;"></div>
<div style="left:539.3px;top:603.2px;width:34.4px;height:34.3px;background:#e1e5ee;"></div>
<div style="left:575px;top:603.2px;width:33.8px;height:34.3px;background:#e1e5ee;"></div>
<div style="left:610px;top:603.2px;width:34px;height:34.3px;background:#e1e5ee;"></div>
<div style="left:645.2px;top:603.2px;width:33.8px;height:34.3px;background:#e1e5ee;"></div>
<div style="left:680.3px;top:603.2px;width:49.7px;height:34.3px;background:#e1e5ee;"></div>
<div style="left:731.3px;top:603.2px;width:61.7px;height:34.3px;background:#e1e5ee;"></div>
<div style="left:794.2px;top:603.2px;width:86.8px;height:34.3px;background:#e1e5ee;"></div>
<div style="left:882.3px;top:603.2px;width:52.4px;height:34.3px;background:#e1e5ee;"></div>
<div style="left:936px;top:603.2px;width:43px;height:34.3px;background:#e1e5ee;"></div>
<div style="left:980px;top:603.2px;width:34px;height:34.3px;background:#e1e5ee;"></div>
<div style="left:1015.3px;top:603.2px;width:86.7px;height:34.3px;background:#e1e5ee;"></div>
<div style="left:1103.4px;top:603.2px;width:103.6px;height:34.3px;background:#e1e5ee;"></div>
<div style="left:1208.3px;top:603.2px;width:101.4px;height:34.3px;background:#e1e5ee;"></div>
<div style="left:1311px;top:603.2px;width:181.7px;height:34.3px;background:#e1e5ee;"></div>
<div style="left:1494.2px;top:603.2px;width:42.6px;height:34.3px;background:#e1e5ee;"></div>
<div style="left:1538.3px;top:603.2px;width:41.3px;height:34.3px;background:#e1e5ee;"></div>
<div style="left:1581px;top:603.2px;width:129.8px;height:34.3px;background:#e1e5ee;"></div>
<div style="left:1712.4px;top:603.2px;width:114.4px;height:34.3px;background:#e1e5ee;"></div>
<div style="left:1828.3px;top:603.2px;width:37.7px;height:34.3px;background:#e1e5ee;"></div>
<span class="t" style="top:610px;font-size:16.5px;line-height:22px;letter-spacing:0.262px;color:#222;left:10.5px;">4</span>
<div style="left:26.2px;top:606.8px;width:67.2px;height:24.8px;background:#e1e5ee;border:1px solid #e6e3dc;border-bottom:1.4px solid #1c1cf0;"></div>
<span class="t" style="top:610px;font-size:14.67px;line-height:22px;letter-spacing:0.000px;color:#111;left:30.6px;">99001</span>
<div style="left:117.4px;top:606.8px;width:97px;height:25.2px;background:#fff;border:1px solid #d6d6d6;"></div>
<span class="t" style="top:610px;font-size:14.67px;line-height:22px;letter-spacing:0.439px;color:#111;left:121.7px;">01/02/2026</span>
<svg class="i" style="left:221.2px;top:612.4px;" width="15" height="16.2" viewBox="0 0 17 18.4"><rect x="0" y="3.1" width="17" height="15.3" rx="1.3" fill="#111"/><rect x="1.25" y="7.10" width="3.10" height="3.20" fill="#fff"/><rect x="4.85" y="7.10" width="3.40" height="3.20" fill="#fff"/><rect x="8.75" y="7.10" width="3.40" height="3.20" fill="#fff"/><rect x="12.65" y="7.10" width="3.10" height="3.20" fill="#fff"/><rect x="1.25" y="10.80" width="3.10" height="3.30" fill="#fff"/><rect x="4.85" y="10.80" width="3.40" height="3.30" fill="#fff"/><rect x="8.75" y="10.80" width="3.40" height="3.30" fill="#fff"/><rect x="12.65" y="10.80" width="3.10" height="3.30" fill="#fff"/><rect x="1.25" y="14.60" width="3.10" height="2.50" fill="#fff"/><rect x="4.85" y="14.60" width="3.40" height="2.50" fill="#fff"/><rect x="8.75" y="14.60" width="3.40" height="2.50" fill="#fff"/><rect x="12.65" y="14.60" width="3.10" height="2.50" fill="#fff"/><rect x="3.1" y="0.65" width="3.3" height="4.9" rx="1.65" fill="#fff" stroke="#111" stroke-width="1.3"/><rect x="10.7" y="0.65" width="3.3" height="4.9" rx="1.65" fill="#fff" stroke="#111" stroke-width="1.3"/></svg>
<div style="left:242.2px;top:606.8px;width:97.2px;height:25.2px;background:#fff;border:1px solid #d6d6d6;"></div>
<span class="t" style="top:610px;font-size:14.67px;line-height:22px;letter-spacing:0.469px;color:#111;left:246.4px;">01/02/2026</span>
<svg class="i" style="left:346.2px;top:612.4px;" width="15" height="16.2" viewBox="0 0 17 18.4"><rect x="0" y="3.1" width="17" height="15.3" rx="1.3" fill="#111"/><rect x="1.25" y="7.10" width="3.10" height="3.20" fill="#fff"/><rect x="4.85" y="7.10" width="3.40" height="3.20" fill="#fff"/><rect x="8.75" y="7.10" width="3.40" height="3.20" fill="#fff"/><rect x="12.65" y="7.10" width="3.10" height="3.20" fill="#fff"/><rect x="1.25" y="10.80" width="3.10" height="3.30" fill="#fff"/><rect x="4.85" y="10.80" width="3.40" height="3.30" fill="#fff"/><rect x="8.75" y="10.80" width="3.40" height="3.30" fill="#fff"/><rect x="12.65" y="10.80" width="3.10" height="3.30" fill="#fff"/><rect x="1.25" y="14.60" width="3.10" height="2.50" fill="#fff"/><rect x="4.85" y="14.60" width="3.40" height="2.50" fill="#fff"/><rect x="8.75" y="14.60" width="3.40" height="2.50" fill="#fff"/><rect x="12.65" y="14.60" width="3.10" height="2.50" fill="#fff"/><rect x="3.1" y="0.65" width="3.3" height="4.9" rx="1.65" fill="#fff" stroke="#111" stroke-width="1.3"/><rect x="10.7" y="0.65" width="3.3" height="4.9" rx="1.65" fill="#fff" stroke="#111" stroke-width="1.3"/></svg>
<div style="left:372px;top:606.8px;width:29.3px;height:25.2px;background:#fff;border:1px solid #d6d6d6;"></div>
<div style="left:415.3px;top:606.8px;width:29.3px;height:25.2px;background:#fff;border:1px solid #d6d6d6;"></div>
<div style="left:458.7px;top:606.8px;width:29.3px;height:25.2px;background:#fff;border:1px solid #d6d6d6;"></div>
<div style="left:501.4px;top:606.8px;width:29.3px;height:25.2px;background:#fff;border:1px solid #d6d6d6;"></div>
<div style="left:541.5px;top:606.8px;width:28.2px;height:25.2px;background:#fff;border:1px solid #d6d6d6;"></div>
<div style="left:578.7px;top:606.8px;width:25.1px;height:25.2px;background:#fff;border:1px solid #d6d6d6;"></div>
<div style="left:613.6px;top:606.8px;width:25.1px;height:25.2px;background:#fff;border:1px solid #d6d6d6;"></div>
<div style="left:648.7px;top:606.8px;width:25.1px;height:25.2px;background:#fff;border:1px solid #d6d6d6;"></div>
<div style="left:689.6px;top:606.8px;width:28.9px;height:25.2px;background:#fff;border:1px solid #d6d6d6;"></div>
<span class="t" style="top:610px;font-size:14.67px;line-height:22px;letter-spacing:0.232px;color:#111;left:701.122px;">1</span>
<div style="left:732.3px;top:606.1px;width:56.4px;height:27px;background:#fff;border:1px solid #c8c8c8;border-radius:2px;"></div>
<svg class="i" style="left:773px;top:615.85px;" width="14" height="9.5" viewBox="0 0 14 9.5"><polyline points="2,2 7,7.5 12,2" fill="none" stroke="#111" stroke-width="2.2" stroke-linecap="round" stroke-linejoin="round"/></svg>
<span class="t" style="top:610px;font-size:12px;line-height:22px;letter-spacing:-0.243px;color:#111;left:740.2px;max-width:27px;overflow:hidden;">Selec</span>
<div style="left:795.5px;top:606.8px;width:82.1px;height:25.2px;background:#fff;border:1px solid #d6d6d6;"></div>
<span class="t" style="top:610px;font-size:14.67px;line-height:22px;letter-spacing:0.346px;color:#111;left:829.903px;">110.00</span>
<span class="t" style="top:610px;font-size:16.5px;line-height:22px;letter-spacing:0.391px;color:#222;left:883.228px;">110.00</span>
<span class="t" style="top:610px;font-size:16.5px;line-height:22px;letter-spacing:0.150px;color:#222;left:946.156px;">0.00</span>
<span class="t" style="top:610px;font-size:16.5px;line-height:22px;letter-spacing:0.150px;color:#222;left:980.756px;">0.00</span>
<div style="left:1016.8px;top:606.8px;width:81.6px;height:25.2px;background:#fff;border:1px solid #d6d6d6;"></div>
<span class="t" style="top:610px;font-size:14.67px;line-height:22px;letter-spacing:0.130px;color:#111;left:1067.16px;">0.00</span>
<div style="left:1105px;top:606.1px;width:98px;height:27px;background:#fff;border:1px solid #c8c8c8;border-radius:2px;"></div>
<svg class="i" style="left:1186.7px;top:615.85px;" width="14" height="9.5" viewBox="0 0 14 9.5"><polyline points="2,2 7,7.5 12,2" fill="none" stroke="#111" stroke-width="2.2" stroke-linecap="round" stroke-linejoin="round"/></svg>
<div style="left:1210px;top:606.8px;width:96.4px;height:25.2px;background:#c6daf6;border:1px solid #bccbe0;"></div>
<span class="t" style="top:610px;font-size:14.67px;line-height:22px;letter-spacing:0.346px;color:#111;left:1258.7px;">110.00</span>
<div style="left:1315.3px;top:606.1px;width:172.4px;height:27px;background:#fff;border:1px solid #c8c8c8;border-radius:2px;"></div>
<svg class="i" style="left:1472px;top:615.85px;" width="14" height="9.5" viewBox="0 0 14 9.5"><polyline points="2,2 7,7.5 12,2" fill="none" stroke="#111" stroke-width="2.2" stroke-linecap="round" stroke-linejoin="round"/></svg>
<span class="t" style="top:610px;font-size:12px;line-height:22px;letter-spacing:-0.390px;color:#111;left:1326.7px;">NEW</span>
<div style="left:1507px;top:610.2px;width:16.4px;height:16.4px;background:#fff;border:1.3px solid #767676;border-radius:3px;"></div>
<svg class="i" style="left:1550.6px;top:614.2px;" width="17.4" height="13.6" viewBox="0 0 21 17"><path d="M8.5 0.5 L0.5 7 L8.5 13.5 V9.6 C13.5 9.4 16.5 11 17.8 16.5 C20.5 9 16.5 4.2 8.5 4 Z" fill="#111a44"/></svg>
<div style="left:1582px;top:606.1px;width:121.3px;height:27px;background:#fff;border:1px solid #c8c8c8;border-radius:2px;"></div>
<svg class="i" style="left:1687.6px;top:615.85px;" width="14" height="9.5" viewBox="0 0 14 9.5"><polyline points="2,2 7,7.5 12,2" fill="none" stroke="#111" stroke-width="2.2" stroke-linecap="round" stroke-linejoin="round"/></svg>
<span class="t" style="top:610px;font-size:12px;line-height:22px;letter-spacing:-0.386px;color:#111;left:1592.2px;">63815D [Neighbo</span>
<div style="left:1713px;top:606.8px;width:86.7px;height:25.2px;background:#fff;border:1px solid #d6d6d6;"></div>
<span class="t" style="top:610px;font-size:14.67px;line-height:22px;letter-spacing:0.459px;color:#111;left:1715.8px;">02/02/2026</span>
<svg class="i" style="left:1807.1px;top:612.4px;" width="15.3" height="16.2" viewBox="0 0 17 18.4"><rect x="0" y="3.1" width="17" height="15.3" rx="1.3" fill="#111"/><rect x="1.25" y="7.10" width="3.10" height="3.20" fill="#fff"/><rect x="4.85" y="7.10" width="3.40" height="3.20" fill="#fff"/><rect x="8.75" y="7.10" width="3.40" height="3.20" fill="#fff"/><rect x="12.65" y="7.10" width="3.10" height="3.20" fill="#fff"/><rect x="1.25" y="10.80" width="3.10" height="3.30" fill="#fff"/><rect x="4.85" y="10.80" width="3.40" height="3.30" fill="#fff"/><rect x="8.75" y="10.80" width="3.40" height="3.30" fill="#fff"/><rect x="12.65" y="10.80" width="3.10" height="3.30" fill="#fff"/><rect x="1.25" y="14.60" width="3.10" height="2.50" fill="#fff"/><rect x="4.85" y="14.60" width="3.40" height="2.50" fill="#fff"/><rect x="8.75" y="14.60" width="3.40" height="2.50" fill="#fff"/><rect x="12.65" y="14.60" width="3.10" height="2.50" fill="#fff"/><rect x="3.1" y="0.65" width="3.3" height="4.9" rx="1.65" fill="#fff" stroke="#111" stroke-width="1.3"/><rect x="10.7" y="0.65" width="3.3" height="4.9" rx="1.65" fill="#fff" stroke="#111" stroke-width="1.3"/></svg>
<svg class="i" style="left:1828.8px;top:613.2px;" width="16.8" height="16" viewBox="0 0 16.8 16"><path d="M4.7 0.2 H15 Q15.8 0.2 15.5 1 L12.2 12.4 Q12 12.9 11.4 12.9 H1.6 Q0.8 12.9 1 12.2 L3.9 0.9 Q4.1 0.2 4.7 0.2 Z" fill="#333"/><path d="M1.1 12.6 Q-0.4 15.4 2.4 15.4 H12.4 Q13 15.4 13.2 14.8 L16.3 3.6" fill="none" stroke="#333" stroke-width="1.15" stroke-linecap="round"/><path d="M5.6 3.7 H13.4 M4.9 6.4 H12.7" stroke="#fff" stroke-width="1.25"/></svg>
<svg class="i" style="left:1850px;top:613.2px;opacity:1;" width="15" height="16.4" viewBox="0 0 15 16.4"><path d="M0.2 3.6 H14.8" stroke="#333" stroke-width="1.2"/><path d="M4.2 3.4 L5.2 0.7 H9.8 L10.8 3.4" fill="none" stroke="#333" stroke-width="1.15" stroke-linejoin="round"/><path d="M1.9 3.8 V14.3 Q1.9 15.8 3.4 15.8 H11.6 Q13.1 15.8 13.1 14.3 V3.8" fill="none" stroke="#333" stroke-width="1.25"/><path d="M4.8 6.2 V12.8 M7.5 6.2 V12.8 M10.2 6.2 V12.8" stroke="#333" stroke-width="1.2"/></svg>
<div style="left:0px;top:646.8px;width:1871px;height:47px;background:#e1e5ee;"></div>
<div style="left:1871px;top:450px;width:2px;height:150px;background:#8a8a8a;"></div>
<div style="left:1871px;top:600px;width:2px;height:46.6px;background:#e6e6e6;"></div>
<div style="left:1871px;top:646.6px;width:2px;height:185.4px;background:#8c8c8c;"></div>
<div style="left:9.1px;top:660px;width:187.5px;height:33.8px;background:#55bdf2;border-radius:5.5px 5.5px 0 0;"></div>
<span class="t" style="top:667px;font-size:17.6px;line-height:22px;letter-spacing:-0.402px;color:#fff;left:20.9px;">Payor Remark</span>
<div style="left:202.3px;top:660px;width:186.6px;height:33.8px;background:#fff;border-radius:5.5px 5.5px 0 0;"></div>
<span class="t" style="top:667px;font-size:17.6px;line-height:22px;letter-spacing:-0.099px;color:#333;left:213.7px;">Line Activity</span>
<div style="left:397px;top:660px;width:186.7px;height:33.8px;background:#55bdf2;border-radius:5.5px 5.5px 0 0;"></div>
<span class="t" style="top:667px;font-size:17.6px;line-height:22px;letter-spacing:-0.468px;color:#fff;left:408.7px;">Claim Hx</span>
<svg class="i" style="left:588.4px;top:661.6px;" width="21" height="19" viewBox="0 0 21 19"><path d="M12 4.8 H5.2 C3.6 4.8 2.6 5.8 2.6 7.4 V14.6 C2.6 16.2 3.6 17.2 5.2 17.2 H12.6 C14.2 17.2 15.2 16.2 15.2 14.6 V11.2" fill="none" stroke="#111" stroke-width="2"/><path d="M8.6 11.6 L17.2 3" stroke="#111" stroke-width="2.6"/><path d="M12.2 1 H19.6 V8.4 Z" fill="#111"/></svg>
<div style="left:0px;top:703.4px;width:1867.6px;height:130px;border:1.3px solid #94c8f7;border-bottom:none;background:#fff;"></div>
<span class="t" style="top:710px;font-size:16.5px;line-height:22px;letter-spacing:0.312px;color:#222;left:19.2px;">Add Activity:</span>
<div style="left:333px;top:710.6px;width:584px;height:34px;background:#fff;border:1px solid #c4c4c4;border-radius:2px;"></div>
<svg class="i" style="left:905px;top:733px;" width="11" height="11" viewBox="0 0 11 11"><path d="M1.5 9.5 L9.5 1.5 M6.2 9.8 L9.8 6.2" stroke="#444" stroke-width="1.2"/></svg>
<div style="left:20px;top:751px;width:1846.7px;height:34.7px;background:#cccccc;"></div>
<span class="t" style="top:757px;font-size:16.5px;line-height:22px;letter-spacing:0.503px;color:#1a6bb3;-webkit-text-stroke:0.5px #1a6bb3;left:23.5px;">Date &amp; Time</span>
<span class="t" style="top:757px;font-size:16.5px;line-height:22px;letter-spacing:0.831px;color:#1a6bb3;-webkit-text-stroke:0.5px #1a6bb3;left:336.2px;">Activity</span>
<span class="t" style="top:757px;font-size:16.5px;line-height:22px;letter-spacing:0.371px;color:#1a6bb3;-webkit-text-stroke:0.5px #1a6bb3;left:1402.2px;">Entered By</span>
<span class="t" style="top:789px;font-size:16.5px;line-height:22px;letter-spacing:0.254px;color:#222;left:19.2px;">02/02/2026 4:53 AM</span>
<span class="t" style="top:789px;font-size:16.5px;line-height:22px;letter-spacing:-0.110px;color:#222;left:332.2px;">RP Changed From DD[IVAN CVIK MD P.A.] To 63815D[IVAN CVIK MD P.A.]</span>
<div style="left:1396px;top:791.6px;width:114px;height:17.6px;background:linear-gradient(90deg,#e4e4e4,#d6d6d6 30%,#dedede 60%,#d4d4d4);filter:blur(1.2px);"></div>
<span class="t" style="top:789px;font-size:16.5px;line-height:22px;letter-spacing:0.955px;color:#222;left:1503.2px;clip-path:inset(0 0 0 5px);">n</span>
<span class="t" style="top:789px;font-size:16.5px;line-height:22px;letter-spacing:0.206px;color:#222;left:1517.2px;">(Charge Master)</span>
<div style="left:20px;top:815px;width:1846.7px;height:18px;background:#e1e5ee;"></div>
<span class="t" style="top:818px;font-size:16.5px;line-height:22px;letter-spacing:0.254px;color:#222;left:19.2px;">02/02/2026 4:40 AM</span>
<span class="t" style="top:818px;font-size:16.5px;line-height:22px;letter-spacing:-0.110px;color:#222;left:332.2px;">RP Changed From PA112[IVAN CVIK MD P.A.] To DD[IVAN CVIK MD P.A.]</span>
<span class="t" style="top:818px;font-size:16.5px;line-height:22px;letter-spacing:0.321px;color:#222;left:1398.2px;">documentation (Charge Master)</span>
<div style="left:0px;top:831.7px;width:1873px;height:46.5px;background:#eeeeee;"></div>
<div style="left:1552px;top:845.7px;width:18px;height:17.2px;background:#fff;border-radius:3px;"></div>
<svg class="i" style="left:1552px;top:845.7px;" width="18" height="17.2" viewBox="0 0 18 17.2"><path d="M3.6 9 L7.2 12.8 L14.6 3.6" fill="none" stroke="#333" stroke-width="2.6"/></svg>
<span class="t" style="top:844px;font-size:16.5px;line-height:22px;letter-spacing:0.223px;color:#111;left:1574.2px;">Run Claim Validation</span>
<div style="left:1752px;top:839px;width:116px;height:31.9px;background:#27b94b;border-radius:3px;"></div>
<svg class="i" style="left:1764.2px;top:846.6px;" width="15.8" height="15.8" viewBox="0 0 16 16"><path d="M1.3 1.3 H11 L14.7 5 V14.7 H1.3 Z" fill="none" stroke="#fff" stroke-width="2" stroke-linejoin="round"/><path d="M4.3 1.6 V5.6 H10 V1.6" fill="none" stroke="#fff" stroke-width="1.7"/><path d="M4.2 14.6 V9.6 H11.8 V14.6" fill="none" stroke="#fff" stroke-width="1.7"/></svg>
<span class="t" style="top:843px;font-size:17.6px;line-height:22px;letter-spacing:-0.693px;color:#fff;left:1783px;"><u>S</u>ave Line</span>
</div></body></html>
